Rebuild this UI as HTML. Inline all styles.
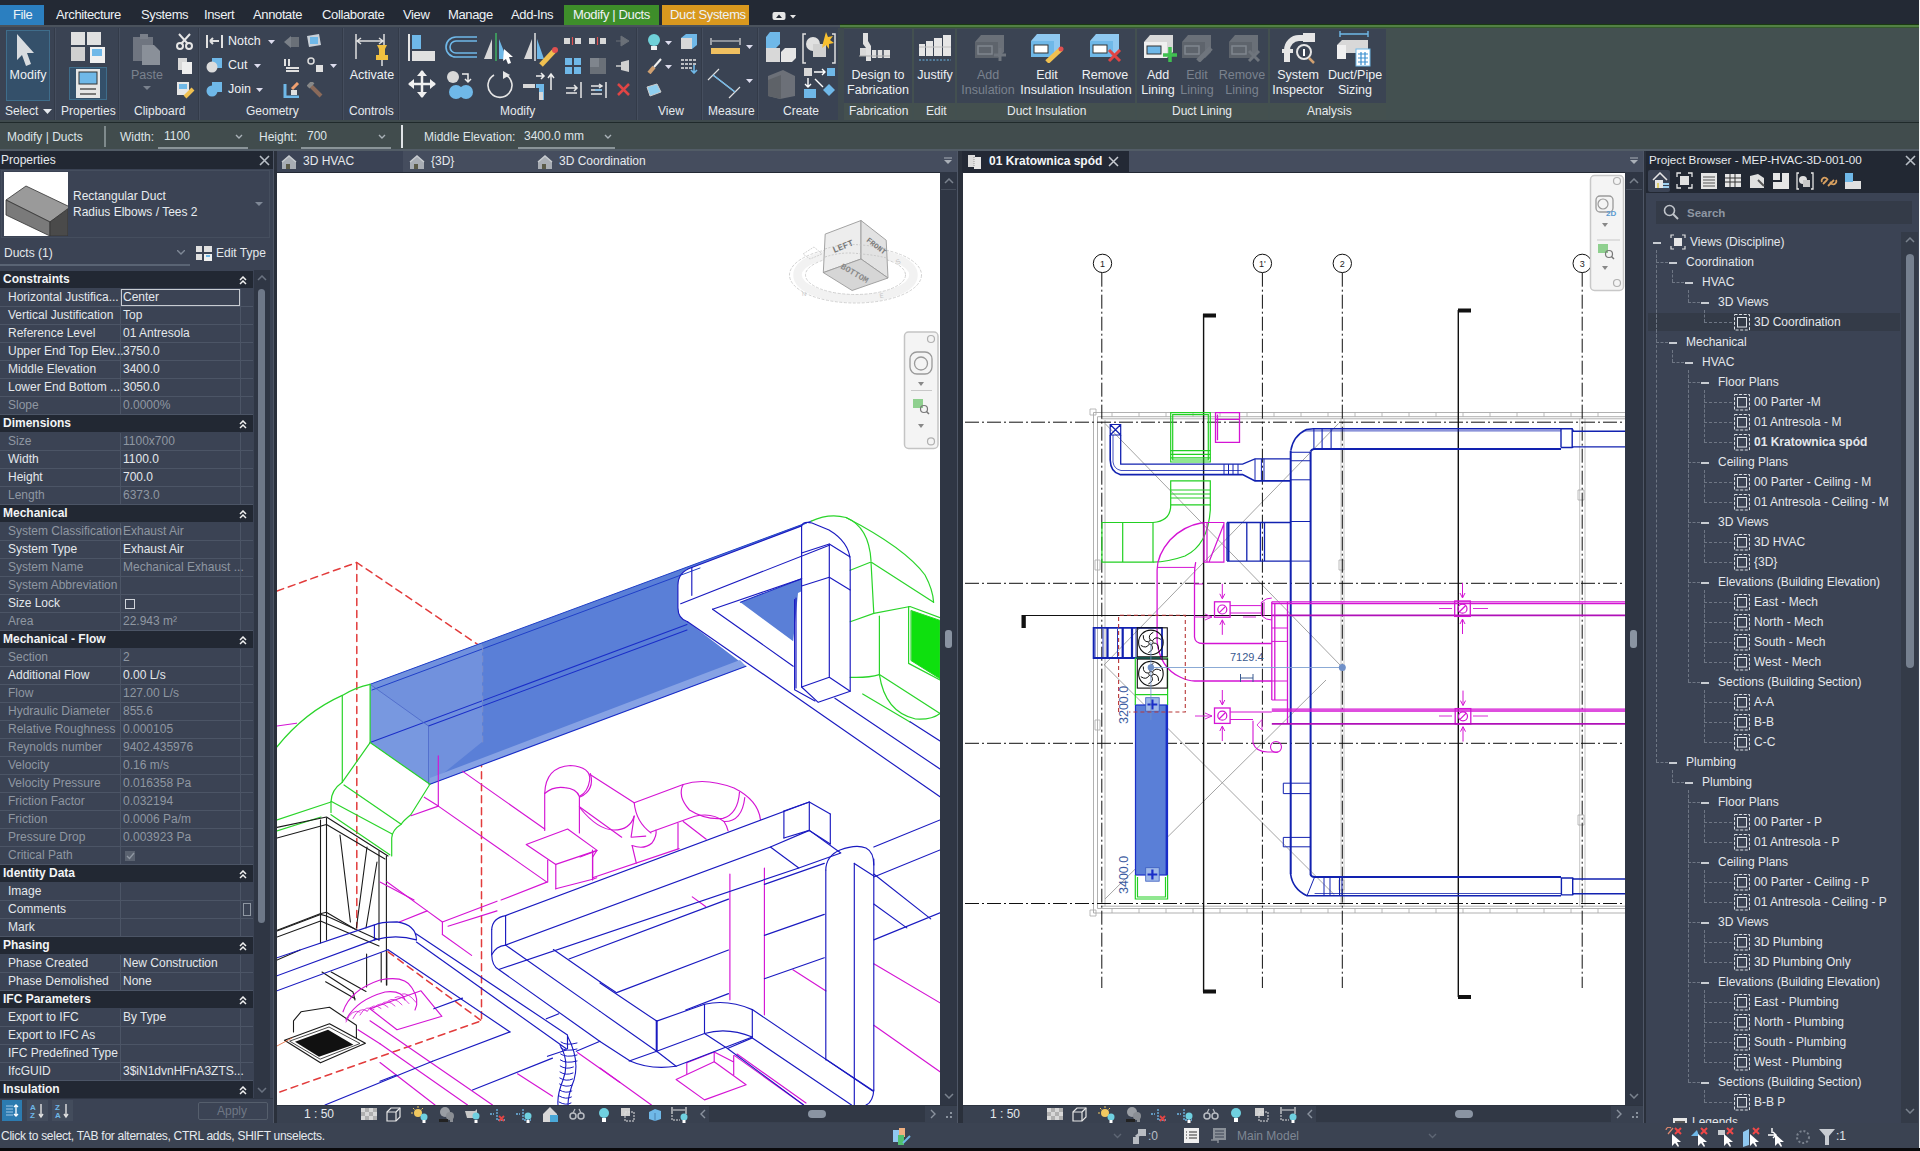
<!DOCTYPE html>
<html><head><meta charset="utf-8">
<style>
*{box-sizing:border-box;margin:0;padding:0}
html,body{width:1920px;height:1151px;overflow:hidden}
body{position:relative;background:#232934;font-family:"Liberation Sans",sans-serif;color:#e8ecf0;font-size:12px}
.a{position:absolute}
.t{position:absolute;white-space:nowrap;line-height:14px}
/* menu */
#menu{left:0;top:0;width:1920px;height:25px;background:#232934}
.mt{position:absolute;top:7.5px;font-size:13px;letter-spacing:-0.37px;color:#eef2f6;white-space:nowrap;line-height:14px}
/* ribbon */
#rib{left:0;top:25px;width:1920px;height:97px;background:#3a4353}
.sep{position:absolute;top:3px;width:2px;height:93px;background:#333b49;border-right:1px solid #454e5e}
.pt{position:absolute;top:79px;font-size:12px;color:#e6eaee;white-space:nowrap;line-height:14px}
.rl{position:absolute;font-size:12.5px;color:#eef1f4;white-space:nowrap;line-height:15px;text-align:center}
.dis{color:#7a828e}
/* options */
#opt{left:0;top:122px;width:1920px;height:29px;background:#414c4d;border-top:1px solid #202a2b;border-bottom:2px solid #525c66}
.ot{position:absolute;top:8px;font-size:12px;color:#dfe5e8;white-space:nowrap;line-height:14px}
/* panels */
.hdr{position:absolute;height:18px;background:#222833;font-size:12px;color:#e6eaee;line-height:18px;white-space:nowrap}
#props{left:0;top:151px;width:273px;height:972px;background:#3b4354}
.row{position:absolute;left:0;width:253px;height:18px;border-bottom:1px solid #4c5566;font-size:12px;line-height:17px;white-space:nowrap}
.row .l{position:absolute;left:8px;top:0;color:#e4e8ec}
.row .v{position:absolute;left:123px;top:0;color:#e4e8ec}
.row .d{position:absolute;left:120px;top:0;width:1px;height:18px;background:#4c5566}
.row .d2{position:absolute;left:240px;top:0;width:1px;height:18px;background:#4c5566}
.row.g .l,.row.g .v{color:#8f97a2}
.sh{position:absolute;left:0;width:253px;height:18px;background:#222833;font-weight:bold;font-size:12px;line-height:17px;color:#f2f4f6;padding-left:3px;border-bottom:1px solid #3b4354}
.sh .c{position:absolute;left:238px;top:0;font-weight:normal;font-size:10px}
/* views */
.tabbar{position:absolute;height:21px;background:#454d5e}
.vp{position:absolute;background:#fff;overflow:hidden}
.vcb{position:absolute;height:18px;background:#394150}
#status{left:0;top:1123px;width:1920px;height:25px;background:#3b4352}
#pb{left:1646px;top:151px;width:274px;height:972px;background:#3b4354}
.tr{position:absolute;font-size:12px;color:#e4e8ec;white-space:nowrap;line-height:14px}
</style></head>
<body>
<!-- MENU -->
<div id="menu" class="a">
  <div class="a" style="left:0;top:5px;width:44px;height:20px;background:#2b7fc0"></div>
  <div class="mt" style="left:13px">File</div>
  <div class="mt" style="left:56px">Architecture</div>
  <div class="mt" style="left:141px">Systems</div>
  <div class="mt" style="left:204px">Insert</div>
  <div class="mt" style="left:253px">Annotate</div>
  <div class="mt" style="left:322px">Collaborate</div>
  <div class="mt" style="left:403px">View</div>
  <div class="mt" style="left:448px">Manage</div>
  <div class="mt" style="left:511px">Add-Ins</div>
  <div class="a" style="left:564px;top:5px;width:95px;height:20px;background:#3e8e2a"></div>
  <div class="mt" style="left:573px">Modify | Ducts</div>
  <div class="a" style="left:662px;top:5px;width:87px;height:20px;background:#d9981e"></div>
  <div class="mt" style="left:670px">Duct Systems</div>
  <svg class="a" style="left:772px;top:11px" width="26" height="10"><rect x="0.5" y="1" width="13" height="8" rx="2" fill="#e6e6e6"/><path d="M4,7 L7,3.5 L10,7 Z" fill="#232934"/><path d="M18,4 L24,4 L21,7.5 Z" fill="#e6e6e6"/></svg>
</div>
<!-- RIBBON -->
<div id="rib" class="a">
  <!-- top highlight line left part -->
  <div class="a" style="left:0;top:0;width:840px;height:2px;background:#4a525c"></div>
  <!-- contextual area -->
  <div class="a" style="left:840px;top:0;width:1080px;height:97px;background:#435050"></div>
  <div class="a" style="left:840px;top:-1px;width:1080px;height:1px;background:#1a3a12"></div>
  <div class="a" style="left:840px;top:0;width:1080px;height:2px;background:#528044"></div>
  <div class="a" style="left:840px;top:2px;width:1080px;height:1px;background:#355a2e"></div>
  <!-- contextual panel bodies -->
  <div class="a" style="left:844px;top:4px;width:68px;height:74px;background:#3b4453"></div>
  <div class="a" style="left:914px;top:4px;width:41px;height:74px;background:#3b4453"></div>
  <div class="a" style="left:957px;top:4px;width:178px;height:74px;background:#3b4453"></div>
  <div class="a" style="left:1137px;top:4px;width:131px;height:74px;background:#3b4453"></div>
  <div class="a" style="left:1270px;top:4px;width:116px;height:74px;background:#3b4453"></div>
  <div class="a" style="left:844px;top:78px;width:68px;height:17px;background:#44504f"></div>
  <div class="a" style="left:914px;top:78px;width:41px;height:17px;background:#44504f"></div>
  <div class="a" style="left:957px;top:78px;width:178px;height:17px;background:#44504f"></div>
  <div class="a" style="left:1137px;top:78px;width:131px;height:17px;background:#44504f"></div>
  <div class="a" style="left:1270px;top:78px;width:116px;height:17px;background:#44504f"></div>
  <!-- separators -->
  <div class="sep" style="left:54px"></div>
  <div class="sep" style="left:118px"></div>
  <div class="sep" style="left:198px"></div>
  <div class="sep" style="left:342px"></div>
  <div class="sep" style="left:398px"></div>
  <div class="sep" style="left:636px"></div>
  <div class="sep" style="left:701px"></div>
  <div class="sep" style="left:757px"></div>
  <div class="a" style="left:838px;top:3px;width:6px;height:93px;background:#3f4a4f"></div>
  <!-- panel titles -->
  <div class="pt" style="left:5px">Select</div>
  <svg class="a" style="left:43px;top:84px" width="9" height="6"><path d="M0 0H9L4.5 5Z" fill="#e6eaee"/></svg>
  <div class="pt" style="left:61px">Properties</div>
  <div class="pt" style="left:134px">Clipboard</div>
  <div class="pt" style="left:246px">Geometry</div>
  <div class="pt" style="left:349px">Controls</div>
  <div class="pt" style="left:500px">Modify</div>
  <div class="pt" style="left:658px">View</div>
  <div class="pt" style="left:708px">Measure</div>
  <div class="pt" style="left:783px">Create</div>
  <div class="pt" style="left:849px">Fabrication</div>
  <div class="pt" style="left:926px">Edit</div>
  <div class="pt" style="left:1007px">Duct Insulation</div>
  <div class="pt" style="left:1172px">Duct Lining</div>
  <div class="pt" style="left:1307px">Analysis</div>

  <!-- Modify button -->
  <div class="a" style="left:6px;top:5px;width:44px;height:71px;background:#34506a;border:1px solid #3f6d8b"></div>
  <svg class="a" style="left:16px;top:8px" width="20" height="34"><path d="M1 1L18 20H11L15 31L10 33L6 22L1 27Z" fill="#d8dce0"/></svg>
  <div class="rl" style="left:6px;top:43px;width:44px">Modify</div>
  <!-- Properties -->
  <svg class="a" style="left:70px;top:6px" width="36" height="32">
    <rect x="1" y="1" width="14" height="13" fill="#e0e0e0"/><rect x="17" y="1" width="14" height="13" fill="#e0e0e0"/>
    <rect x="1" y="16" width="14" height="14" fill="#d0d0d0"/><rect x="20" y="16" width="15" height="16" fill="#f0f0f0"/><rect x="22" y="18" width="10" height="7" fill="#6fb8e8"/>
  </svg>
  <div class="a" style="left:69px;top:42px;width:38px;height:33px;border:1px solid #3f6d8b;background:#34506a"></div>
  <svg class="a" style="left:76px;top:44px" width="24" height="29"><rect x="0" y="0" width="24" height="29" fill="#e6e6e6"/><rect x="3" y="3" width="18" height="12" fill="#6fb8e8" stroke="#333" stroke-width="1"/><path d="M4 20H20M4 25H20" stroke="#555" stroke-width="1.5"/></svg>
  <!-- Clipboard -->
  <svg class="a" style="left:132px;top:8px" width="30" height="32"><rect x="1" y="4" width="20" height="24" fill="#6f7580"/><rect x="8" y="1" width="8" height="5" fill="#7a808a"/><path d="M10 12H22L28 18V32H10Z" fill="#8a9099"/></svg>
  <div class="rl dis" style="left:128px;top:43px;width:38px">Paste</div>
  <svg class="a" style="left:143px;top:61px" width="8" height="5"><path d="M0 0H8L4 4Z" fill="#7a828e"/></svg>
  <svg class="a" style="left:176px;top:8px" width="18" height="17"><circle cx="4" cy="13" r="3" fill="none" stroke="#e6e6e6" stroke-width="2"/><circle cx="13" cy="13" r="3" fill="none" stroke="#e6e6e6" stroke-width="2"/><path d="M3 1L12 11M14 1L5 11" stroke="#e6e6e6" stroke-width="2"/></svg>
  <svg class="a" style="left:177px;top:32px" width="16" height="17"><rect x="1" y="1" width="9" height="12" fill="#d8d8d8"/><rect x="5" y="5" width="10" height="12" fill="#eeeeee"/></svg>
  <svg class="a" style="left:176px;top:56px" width="19" height="18"><rect x="1" y="1" width="12" height="13" fill="#e6e6e6"/><rect x="3" y="3" width="8" height="5" fill="#6fb8e8"/><path d="M9 16L17 8" stroke="#f0c050" stroke-width="4"/></svg>
  <!-- Geometry -->
  <svg class="a" style="left:206px;top:9px" width="17" height="15"><path d="M1 1V14M16 1V14M4 7H13M4 7L7 4M4 7L7 10" stroke="#e0e0e0" stroke-width="2" fill="none"/></svg>
  <div class="t" style="left:228px;top:9px;font-size:12.5px;color:#eef1f4">Notch</div>
  <svg class="a" style="left:268px;top:15px" width="7" height="4"><path d="M0 0H7L3.5 4Z" fill="#dde"/></svg>
  <svg class="a" style="left:206px;top:32px" width="17" height="16"><rect x="6" y="1" width="10" height="10" fill="#6fb8e8"/><circle cx="6" cy="10" r="5.5" fill="#dcdcdc"/></svg>
  <div class="t" style="left:228px;top:33px;font-size:12.5px;color:#eef1f4">Cut</div>
  <svg class="a" style="left:254px;top:39px" width="7" height="4"><path d="M0 0H7L3.5 4Z" fill="#dde"/></svg>
  <svg class="a" style="left:206px;top:56px" width="17" height="16"><rect x="6" y="1" width="10" height="10" fill="#6fb8e8"/><circle cx="6" cy="10" r="5.5" fill="#6fb8e8"/></svg>
  <div class="t" style="left:228px;top:57px;font-size:12.5px;color:#eef1f4">Join</div>
  <svg class="a" style="left:256px;top:63px" width="7" height="4"><path d="M0 0H7L3.5 4Z" fill="#dde"/></svg>
  <svg class="a" style="left:283px;top:9px" width="17" height="15"><path d="M1 8L8 2V14Z" fill="#7a8088"/><rect x="8" y="3" width="8" height="10" fill="#6a7078"/></svg>
  <svg class="a" style="left:306px;top:8px" width="16" height="16"><path d="M1 3L13 1L15 12L3 14Z" fill="#c8d0d8"/><rect x="4" y="4" width="8" height="7" fill="#6fb8e8"/></svg>
  <svg class="a" style="left:283px;top:33px" width="17" height="16"><path d="M2 1V8M6 1V8M3 10H16M3 13H16" stroke="#e0e0e0" stroke-width="2"/></svg>
  <svg class="a" style="left:307px;top:32px" width="18" height="16"><circle cx="4" cy="4" r="3" fill="none" stroke="#ddd" stroke-width="1.5"/><rect x="9" y="8" width="7" height="7" fill="#e0e0e0"/></svg>
  <svg class="a" style="left:330px;top:39px" width="7" height="4"><path d="M0 0H7L3.5 4Z" fill="#dde"/></svg>
  <svg class="a" style="left:283px;top:57px" width="17" height="16"><path d="M2 2V15H16" stroke="#6fb8e8" stroke-width="3" fill="none"/><rect x="8" y="8" width="6" height="5" fill="#e0e0e0"/><path d="M9 7L15 1" stroke="#f0a070" stroke-width="3"/></svg>
  <svg class="a" style="left:307px;top:57px" width="16" height="16"><path d="M3 3L14 14" stroke="#8a6a5a" stroke-width="4"/><path d="M1 5L6 0" stroke="#888" stroke-width="4"/></svg>
  <!-- Controls -->
  <svg class="a" style="left:354px;top:8px" width="36" height="34"><path d="M2 1V26M30 1V26M3 8H29M3 8L7 5M3 8L7 11M29 8L25 5M29 8L25 11" stroke="#e0e0e0" stroke-width="1.5" fill="none"/><path d="M23 12H33L31 16V22H34V27H22V22H25V16Z" fill="#f0c040"/><path d="M28 27V33" stroke="#e0e0e0" stroke-width="1.5"/></svg>
  <div class="rl" style="left:348px;top:43px;width:48px">Activate</div>
  <!-- Modify panel -->
  <svg class="a" style="left:408px;top:8px" width="28" height="30"><path d="M1 1V28" stroke="#e6e6e6" stroke-width="2"/><rect x="4" y="2" width="9" height="14" fill="#6fb8e8"/><rect x="4" y="18" width="23" height="10" fill="#e0e0e0"/></svg>
  <svg class="a" style="left:444px;top:11px" width="34" height="22"><path d="M33 1H12A10 10 0 0 0 12 21H33M33 5H12A6 6 0 0 0 12 17H33" stroke="#6fb8e8" stroke-width="1.6" fill="none"/></svg>
  <svg class="a" style="left:483px;top:6px" width="34" height="36"><path d="M9 28L1 28L9 8Z" fill="#d8d8d8"/><path d="M13 2V30" stroke="#40b060" stroke-width="1.5"/><path d="M16 8L24 28H16Z" fill="#6fb8e8"/><path d="M21 18L30 26H26L28 32L25 33L23 28L20 30Z" fill="#fff"/></svg>
  <svg class="a" style="left:522px;top:6px" width="36" height="36"><path d="M10 28L2 28L10 8Z" fill="#d8d8d8"/><path d="M13 2V30" stroke="#e0e0e0" stroke-width="1.5"/><path d="M15 8L22 28H15Z" fill="#6fb8e8"/><path d="M19 34L32 20" stroke="#f0c050" stroke-width="5"/><circle cx="33" cy="19" r="3" fill="#e05050"/></svg>
  <svg class="a" style="left:408px;top:45px" width="28" height="28"><path d="M14 1V27M1 14H27" stroke="#f0f0f0" stroke-width="2.5"/><path d="M14 0L9 6H19ZM14 28L9 22H19ZM0 14L6 9V19ZM28 14L22 9V19Z" fill="#f0f0f0"/></svg>
  <svg class="a" style="left:446px;top:45px" width="30" height="30"><circle cx="7" cy="7" r="6" fill="#d8d8d8"/><path d="M16 4H22V12M19 9L22 12L25 9" stroke="#eee" stroke-width="1.5" fill="none"/><circle cx="10" cy="22" r="7" fill="#6fb8e8"/><circle cx="20" cy="22" r="7" fill="#6fb8e8"/></svg>
  <svg class="a" style="left:486px;top:44px" width="30" height="32"><path d="M20 6A12 12 0 1 1 8 6" stroke="#e6e6e6" stroke-width="1.6" fill="none"/><path d="M17 2L24 6L17 10Z" fill="#e6e6e6"/></svg>
  <svg class="a" style="left:522px;top:45px" width="36" height="30"><path d="M14 6L22 6M19 3L22 6L19 9" stroke="#eee" stroke-width="1.5" fill="none"/><rect x="1" y="14" width="12" height="4" fill="#d8d8d8"/><path d="M14 14H22V30H17V18H14Z" fill="#6fb8e8"/><rect x="17" y="22" width="4" height="8" fill="#d8d8d8"/><path d="M29 4V20M26 8L29 4L32 8" stroke="#eee" stroke-width="1.5" fill="none"/></svg>
  <svg class="a" style="left:564px;top:12px" width="18" height="8"><rect x="0" y="1" width="6" height="6" fill="#d8d8d8"/><rect x="11" y="1" width="6" height="6" fill="#d8d8d8"/><path d="M8.5 0V8" stroke="#e05050" stroke-width="1.2"/></svg>
  <svg class="a" style="left:589px;top:12px" width="18" height="8"><rect x="0" y="1" width="6" height="6" fill="#d8d8d8"/><rect x="11" y="1" width="6" height="6" fill="#d8d8d8"/><path d="M8.5 0V8" stroke="#e05050" stroke-width="1.2"/></svg>
  <svg class="a" style="left:615px;top:9px" width="16" height="14"><path d="M1 7H6M6 2V12L14 7Z" stroke="#6a7078" fill="#6a7078"/></svg>
  <svg class="a" style="left:565px;top:33px" width="16" height="16"><rect x="0" y="0" width="7" height="7" fill="#6fb8e8"/><rect x="9" y="0" width="7" height="7" fill="#6fb8e8"/><rect x="0" y="9" width="7" height="7" fill="#6fb8e8"/><rect x="9" y="9" width="7" height="7" fill="#6fb8e8"/></svg>
  <svg class="a" style="left:590px;top:33px" width="16" height="16"><rect x="0" y="0" width="16" height="16" fill="#6a7078"/><rect x="0" y="0" width="9" height="9" fill="#7f858d"/></svg>
  <svg class="a" style="left:615px;top:34px" width="16" height="14"><path d="M1 7H6" stroke="#ccc" stroke-width="1.5"/><path d="M6 3L14 1V13L6 11Z" fill="#d0d0d0"/></svg>
  <svg class="a" style="left:565px;top:57px" width="17" height="16"><path d="M16 0V16M1 6H12M9 3L12 6L9 9M1 11H12" stroke="#e6e6e6" stroke-width="1.5" fill="none"/></svg>
  <svg class="a" style="left:590px;top:57px" width="17" height="16"><path d="M16 0V16M1 4H12M9 2L12 4L9 6M1 8H12M1 12H12" stroke="#e6e6e6" stroke-width="1.5" fill="none"/><path d="M5 8H12" stroke="#6fb8e8" stroke-width="1.5"/></svg>
  <svg class="a" style="left:617px;top:58px" width="13" height="13"><path d="M1 1L12 12M12 1L1 12" stroke="#e04545" stroke-width="2.5"/></svg>
  <!-- View panel -->
  <svg class="a" style="left:647px;top:9px" width="14" height="16"><circle cx="7" cy="6" r="6" fill="#6fd0d8"/><rect x="4" y="12" width="6" height="4" fill="#eee"/></svg>
  <svg class="a" style="left:665px;top:16px" width="7" height="4"><path d="M0 0H7L3.5 4Z" fill="#dde"/></svg>
  <svg class="a" style="left:680px;top:8px" width="18" height="17"><path d="M1 5L6 1H17V12L12 16H1Z" fill="#6fb8e8"/><rect x="1" y="5" width="11" height="11" fill="#d8d8d8"/></svg>
  <svg class="a" style="left:647px;top:33px" width="15" height="16"><path d="M2 15L7 9" stroke="#d0a070" stroke-width="4"/><path d="M7 9L14 1" stroke="#f0f0f0" stroke-width="2"/></svg>
  <svg class="a" style="left:665px;top:40px" width="7" height="4"><path d="M0 0H7L3.5 4Z" fill="#dde"/></svg>
  <svg class="a" style="left:680px;top:33px" width="18" height="16"><path d="M1 2H16M1 6H16M1 10H12" stroke="#e6e6e6" stroke-width="1.4" stroke-dasharray="3 1"/><path d="M14 7V15M11 12L14 15L17 12" stroke="#6fb8e8" stroke-width="1.6" fill="none"/></svg>
  <svg class="a" style="left:645px;top:58px" width="17" height="14"><path d="M2 4L12 1L16 9L5 13Z" fill="#8fcff0" stroke="#ccc"/></svg>
  <!-- Measure -->
  <svg class="a" style="left:710px;top:12px" width="31" height="18"><path d="M1 1V8M30 1V8M2 4H29" stroke="#e0e0e0" stroke-width="1.2"/><rect x="1" y="11" width="29" height="6" fill="#f0c060"/></svg>
  <svg class="a" style="left:746px;top:20px" width="7" height="4"><path d="M0 0H7L3.5 4Z" fill="#dde"/></svg>
  <svg class="a" style="left:707px;top:42px" width="34" height="32"><path d="M1 13L12 2M22 31L33 20M6 8L28 25" stroke="#e0e0e0" stroke-width="1.2"/><path d="M6 8L28 25" stroke="#6fb8e8" stroke-width="1.4"/></svg>
  <svg class="a" style="left:746px;top:54px" width="7" height="4"><path d="M0 0H7L3.5 4Z" fill="#dde"/></svg>
  <!-- Create -->
  <svg class="a" style="left:765px;top:6px" width="32" height="32"><path d="M1 6L5 1H15V13L11 17H1Z" fill="#6fb8e8"/><rect x="1" y="17" width="14" height="14" fill="#d8d8d8"/><path d="M16 21L20 17H31V27L27 31H16Z" fill="#e6e6e6"/></svg>
  <svg class="a" style="left:802px;top:5px" width="34" height="34"><path d="M4 4H1V33H4M30 4H33V33H30" stroke="#e0e0e0" stroke-width="1.5" fill="none"/><circle cx="11" cy="14" r="7" fill="#e0e0e0"/><rect x="11" y="14" width="13" height="13" fill="#d0d0d0"/><path d="M24 2L26 7L31 6L28 10L32 13L27 14L27 19L24 15L20 18L21 13Z" fill="#f8c030"/></svg>
  <svg class="a" style="left:765px;top:43px" width="32" height="32"><path d="M3 8L18 2L30 8V28L15 31L3 28Z" fill="#6c7078"/><path d="M3 12L16 7V31L3 28Z" fill="#5e6268"/></svg>
  <svg class="a" style="left:803px;top:42px" width="34" height="32"><rect x="1" y="1" width="8" height="8" fill="#d8d8d8"/><path d="M11 5H22M19 2L22 5L19 8" stroke="#fff" stroke-width="1.4" fill="none"/><rect x="24" y="1" width="8" height="8" fill="#6fb8e8"/><path d="M5 11V20M2 17L5 20L8 17M12 12L20 20" stroke="#fff" stroke-width="1.4" fill="none"/><rect x="1" y="22" width="12" height="9" fill="#6fb8e8"/><path d="M26 17L32 23L26 29L20 23Z" fill="#6fb8e8"/></svg>
  <!-- Fabrication -->
  <svg class="a" style="left:858px;top:7px" width="34" height="30"><path d="M10 1V9L13 14V29H8V16L5 12V1" fill="#e0e0e0"/><rect x="2" y="16" width="6" height="8" fill="#d8d8d8"/><rect x="14" y="18" width="18" height="8" fill="#e0e0e0"/><path d="M19 18V26M25 18V26" stroke="#3b4453" stroke-width="1.5"/><path d="M1 24H32" stroke="#aaa" stroke-width="1"/></svg>
  <div class="rl" style="left:844px;top:43px;width:68px">Design to<br>Fabrication</div>
  <!-- Edit -->
  <svg class="a" style="left:918px;top:9px" width="34" height="28"><path d="M1 10H7V22H1ZM8 7H15V22H8ZM16 4H24V22H16ZM25 1H33V22H25Z" fill="#e6e6e6"/><path d="M1 13H33" stroke="#c0c0c0" stroke-width="1"/><path d="M1 26H33" stroke="#6fb8e8" stroke-width="1.2" stroke-dasharray="2 1.5"/></svg>
  <div class="rl" style="left:912px;top:43px;width:46px">Justify</div>
  <!-- Duct Insulation -->
  <svg class="a" style="left:974px;top:9px" width="32" height="28"><path d="M1 8L7 1H30V18L24 24H1Z" fill="#6a7078"/><path d="M1 8H24V24H1Z" fill="#5e646c"/><rect x="4" y="12" width="14" height="8" fill="none" stroke="#80868e" stroke-width="1.5"/><path d="M26 14V27M20 21H32" stroke="#6f757d" stroke-width="3"/></svg>
  <div class="rl dis" style="left:957px;top:43px;width:62px">Add<br>Insulation</div>
  <svg class="a" style="left:1030px;top:8px" width="34" height="30"><path d="M1 8L7 1H30V18L24 24H1Z" fill="#8fc8f0"/><path d="M1 8H24V24H1Z" fill="#6fb8e8"/><rect x="4" y="12" width="14" height="8" fill="#fff" stroke="#333" stroke-width="1"/><path d="M17 29L31 16" stroke="#f0c050" stroke-width="5"/><circle cx="31" cy="16" r="2.5" fill="#e05050"/></svg>
  <div class="rl" style="left:1016px;top:43px;width:62px">Edit<br>Insulation</div>
  <svg class="a" style="left:1089px;top:8px" width="34" height="30"><path d="M1 8L7 1H30V18L24 24H1Z" fill="#8fc8f0"/><path d="M1 8H24V24H1Z" fill="#6fb8e8"/><rect x="4" y="12" width="14" height="8" fill="#fff" stroke="#333" stroke-width="1"/><path d="M20 17L31 28M31 17L20 28" stroke="#e04545" stroke-width="3"/></svg>
  <div class="rl" style="left:1074px;top:43px;width:62px">Remove<br>Insulation</div>
  <!-- Duct Lining -->
  <svg class="a" style="left:1143px;top:9px" width="34" height="28"><path d="M1 8L7 1H30V18L24 24H1Z" fill="#d8d8d8"/><path d="M1 8H24V24H1Z" fill="#f0f0f0"/><rect x="4" y="12" width="14" height="8" fill="#6fb8e8" stroke="#333" stroke-width="1"/><path d="M27 13V28M20 21H34" stroke="#40c050" stroke-width="3.5"/></svg>
  <div class="rl" style="left:1136px;top:43px;width:44px">Add<br>Lining</div>
  <svg class="a" style="left:1181px;top:9px" width="34" height="28"><path d="M1 8L7 1H30V18L24 24H1Z" fill="#6a7078"/><path d="M1 8H24V24H1Z" fill="#5e646c"/><rect x="4" y="12" width="14" height="8" fill="none" stroke="#80868e" stroke-width="1.5"/><path d="M17 27L30 14" stroke="#6f757d" stroke-width="5"/></svg>
  <div class="rl dis" style="left:1176px;top:43px;width:42px">Edit<br>Lining</div>
  <svg class="a" style="left:1228px;top:9px" width="34" height="28"><path d="M1 8L7 1H30V18L24 24H1Z" fill="#6a7078"/><path d="M1 8H24V24H1Z" fill="#5e646c"/><rect x="4" y="12" width="14" height="8" fill="none" stroke="#80868e" stroke-width="1.5"/><path d="M21 17L31 27M31 17L21 27" stroke="#6f757d" stroke-width="3"/></svg>
  <div class="rl dis" style="left:1216px;top:43px;width:52px">Remove<br>Lining</div>
  <!-- Analysis -->
  <svg class="a" style="left:1281px;top:7px" width="34" height="34"><path d="M6 30V18A12 12 0 0 1 18 6H24" stroke="#e6e6e6" stroke-width="6" fill="none"/><rect x="22" y="1" width="12" height="9" fill="#e6e6e6"/><rect x="1" y="17" width="11" height="4" fill="#e6e6e6"/><circle cx="23" cy="20" r="7" fill="#3b4453" stroke="#e6e6e6" stroke-width="2"/><path d="M23 17V24" stroke="#fff" stroke-width="2"/><path d="M28 26L33 31" stroke="#d0a070" stroke-width="2.5"/></svg>
  <div class="rl" style="left:1270px;top:43px;width:56px">System<br>Inspector</div>
  <svg class="a" style="left:1336px;top:6px" width="36" height="36"><path d="M4 3H32M4 0V6M32 0V6" stroke="#6fb8e8" stroke-width="1.4"/><path d="M1 14L6 9H32V22H10V28H1Z" fill="#d8d8d8"/><path d="M1 14H10V28H1Z" fill="#f0f0f0"/><rect x="20" y="18" width="14" height="17" fill="#fff" stroke="#6fb8e8"/><path d="M22 23H32M22 27H32M22 31H32M25 21V34M29 21V34" stroke="#3a8fd0" stroke-width="1.2"/></svg>
  <div class="rl" style="left:1326px;top:43px;width:58px">Duct/Pipe<br>Sizing</div>
  <!-- bottom edge -->
  <div class="a" style="left:0;top:95px;width:1920px;height:2px;background:#3f4a4d"></div>
</div>

<!-- OPTIONS BAR -->
<div id="opt" class="a">
  <div class="ot" style="left:7px;top:7px">Modify | Ducts</div>
  <div class="a" style="left:104px;top:3px;width:2px;height:21px;background:#7f8a8c"></div>
  <div class="ot" style="left:120px;top:7px">Width:</div>
  <div class="ot" style="left:164px;top:6px">1100</div>
  <svg class="a" style="left:235px;top:11px" width="8" height="5"><path d="M1 1L4 4L7 1" stroke="#aab2b8" stroke-width="1.4" fill="none"/></svg>
  <div class="a" style="left:158px;top:24px;width:90px;height:2px;background:#8a9498"></div>
  <div class="ot" style="left:259px;top:7px">Height:</div>
  <div class="ot" style="left:307px;top:6px">700</div>
  <svg class="a" style="left:378px;top:11px" width="8" height="5"><path d="M1 1L4 4L7 1" stroke="#aab2b8" stroke-width="1.4" fill="none"/></svg>
  <div class="a" style="left:301px;top:24px;width:90px;height:2px;background:#8a9498"></div>
  <div class="a" style="left:401px;top:2px;width:2px;height:23px;background:#e0e4e6"></div>
  <div class="ot" style="left:424px;top:7px">Middle Elevation:</div>
  <div class="ot" style="left:524px;top:6px">3400.0 mm</div>
  <svg class="a" style="left:604px;top:11px" width="8" height="5"><path d="M1 1L4 4L7 1" stroke="#aab2b8" stroke-width="1.4" fill="none"/></svg>
  <div class="a" style="left:518px;top:24px;width:97px;height:2px;background:#8a9498"></div>
</div>

<!-- PROPERTIES -->
<div id="props" class="a">
<div class="hdr" style="left:0;top:0;width:273px;padding-left:1px">Properties</div>
<svg class="a" style="left:259px;top:4px" width="11" height="11"><path d="M1 1L10 10M10 1L1 10" stroke="#b8bec6" stroke-width="1.6"/></svg>
<div class="a" style="left:1px;top:19px;width:269px;height:68px;border:1px solid #454e5e;background:#3b4354"></div>
<div class="a" style="left:4px;top:21px;width:64px;height:64px;background:#fff"></div>
<svg class="a" style="left:4px;top:21px" width="64" height="64"><path d="M2 28L22 14L66 35L46 50Z" fill="#9a9a9a" stroke="#333" stroke-width="0.8"/><path d="M2 28L46 50V64L2 43Z" fill="#7a7a7a" stroke="#333" stroke-width="0.8"/><path d="M46 50L64 37V64H46Z" fill="#4a4a4a" stroke="#333" stroke-width="0.8"/></svg>
<div class="t" style="left:73px;top:38px;color:#e8ecf0">Rectangular Duct</div>
<div class="t" style="left:73px;top:54px;color:#e8ecf0">Radius Elbows / Tees 2</div>
<svg class="a" style="left:255px;top:51px" width="8" height="5"><path d="M0 0H8L4 4Z" fill="#7f8896"/></svg>
<div class="t" style="left:4px;top:95px;color:#e4e8ec">Ducts (1)</div>
<svg class="a" style="left:177px;top:99px" width="8" height="6"><path d="M0 0L4 4L8 0" stroke="#7f8896" fill="none" stroke-width="1.4"/></svg>
<div class="a" style="left:0;top:113px;width:190px;height:2px;background:#5a6474"></div>
<svg class="a" style="left:195px;top:94px" width="18" height="16"><rect x="1" y="1" width="6" height="6" fill="#e0e0e0"/><rect x="9" y="1" width="8" height="6" fill="#e0e0e0"/><rect x="1" y="9" width="6" height="6" fill="#e0e0e0"/><rect x="9" y="9" width="8" height="7" fill="#f0f0f0"/><rect x="11" y="10" width="4" height="2" fill="#6fb8e8"/></svg>
<div class="t" style="left:216px;top:95px;color:#e4e8ec">Edit Type</div>
<div class="sh" style="top:120px">Constraints<svg class="a" style="left:239px;top:5px" width="8" height="9"><path d="M1 4L4 1L7 4M1 8L4 5L7 8" stroke="#f0f0f0" stroke-width="1.5" fill="none"/></svg></div>
<div class="row" style="top:138px"><div class="d"></div><div class="d2"></div><div class="a" style="left:121px;top:0;width:119px;height:17px;border:1px solid #c8ccd2"></div><span class="l">Horizontal Justifica...</span><span class="v">Center</span></div>
<div class="row" style="top:156px"><div class="d"></div><div class="d2"></div><span class="l">Vertical Justification</span><span class="v">Top</span></div>
<div class="row" style="top:174px"><div class="d"></div><div class="d2"></div><span class="l">Reference Level</span><span class="v">01 Antresola</span></div>
<div class="row" style="top:192px"><div class="d"></div><div class="d2"></div><span class="l">Upper End Top Elev...</span><span class="v">3750.0</span></div>
<div class="row" style="top:210px"><div class="d"></div><div class="d2"></div><span class="l">Middle Elevation</span><span class="v">3400.0</span></div>
<div class="row" style="top:228px"><div class="d"></div><div class="d2"></div><span class="l">Lower End Bottom ...</span><span class="v">3050.0</span></div>
<div class="row g" style="top:246px"><div class="d"></div><div class="d2"></div><span class="l">Slope</span><span class="v">0.0000%</span></div>
<div class="sh" style="top:264px">Dimensions<svg class="a" style="left:239px;top:5px" width="8" height="9"><path d="M1 4L4 1L7 4M1 8L4 5L7 8" stroke="#f0f0f0" stroke-width="1.5" fill="none"/></svg></div>
<div class="row g" style="top:282px"><div class="d"></div><div class="d2"></div><span class="l">Size</span><span class="v">1100x700</span></div>
<div class="row" style="top:300px"><div class="d"></div><div class="d2"></div><span class="l">Width</span><span class="v">1100.0</span></div>
<div class="row" style="top:318px"><div class="d"></div><div class="d2"></div><span class="l">Height</span><span class="v">700.0</span></div>
<div class="row g" style="top:336px"><div class="d"></div><div class="d2"></div><span class="l">Length</span><span class="v">6373.0</span></div>
<div class="sh" style="top:354px">Mechanical<svg class="a" style="left:239px;top:5px" width="8" height="9"><path d="M1 4L4 1L7 4M1 8L4 5L7 8" stroke="#f0f0f0" stroke-width="1.5" fill="none"/></svg></div>
<div class="row g" style="top:372px"><div class="d"></div><div class="d2"></div><span class="l">System Classification</span><span class="v">Exhaust Air</span></div>
<div class="row" style="top:390px"><div class="d"></div><div class="d2"></div><span class="l">System Type</span><span class="v">Exhaust Air</span></div>
<div class="row g" style="top:408px"><div class="d"></div><div class="d2"></div><span class="l">System Name</span><span class="v">Mechanical Exhaust ...</span></div>
<div class="row g" style="top:426px"><div class="d"></div><div class="d2"></div><span class="l">System Abbreviation</span><span class="v"></span></div>
<div class="row" style="top:444px"><div class="d"></div><div class="d2"></div><div class="a" style="left:125px;top:4px;width:10px;height:10px;border:1px solid #d0d4da"></div><span class="l">Size Lock</span><span class="v"></span></div>
<div class="row g" style="top:462px"><div class="d"></div><div class="d2"></div><span class="l">Area</span><span class="v">22.943 m&sup2;</span></div>
<div class="sh" style="top:480px">Mechanical - Flow<svg class="a" style="left:239px;top:5px" width="8" height="9"><path d="M1 4L4 1L7 4M1 8L4 5L7 8" stroke="#f0f0f0" stroke-width="1.5" fill="none"/></svg></div>
<div class="row g" style="top:498px"><div class="d"></div><div class="d2"></div><span class="l">Section</span><span class="v">2</span></div>
<div class="row" style="top:516px"><div class="d"></div><div class="d2"></div><span class="l">Additional Flow</span><span class="v">0.00 L/s</span></div>
<div class="row g" style="top:534px"><div class="d"></div><div class="d2"></div><span class="l">Flow</span><span class="v">127.00 L/s</span></div>
<div class="row g" style="top:552px"><div class="d"></div><div class="d2"></div><span class="l">Hydraulic Diameter</span><span class="v">855.6</span></div>
<div class="row g" style="top:570px"><div class="d"></div><div class="d2"></div><span class="l">Relative Roughness</span><span class="v">0.000105</span></div>
<div class="row g" style="top:588px"><div class="d"></div><div class="d2"></div><span class="l">Reynolds number</span><span class="v">9402.435976</span></div>
<div class="row g" style="top:606px"><div class="d"></div><div class="d2"></div><span class="l">Velocity</span><span class="v">0.16 m/s</span></div>
<div class="row g" style="top:624px"><div class="d"></div><div class="d2"></div><span class="l">Velocity Pressure</span><span class="v">0.016358 Pa</span></div>
<div class="row g" style="top:642px"><div class="d"></div><div class="d2"></div><span class="l">Friction Factor</span><span class="v">0.032194</span></div>
<div class="row g" style="top:660px"><div class="d"></div><div class="d2"></div><span class="l">Friction</span><span class="v">0.0006 Pa/m</span></div>
<div class="row g" style="top:678px"><div class="d"></div><div class="d2"></div><span class="l">Pressure Drop</span><span class="v">0.003923 Pa</span></div>
<div class="row g" style="top:696px"><div class="d"></div><div class="d2"></div><div class="a" style="left:125px;top:4px;width:10px;height:10px;background:#5a6270"></div><svg class="a" style="left:126px;top:5px" width="9" height="8"><path d="M1 4L3.5 6.5L8 1" stroke="#8f97a2" stroke-width="1.4" fill="none"/></svg><span class="l">Critical Path</span><span class="v"></span></div>
<div class="sh" style="top:714px">Identity Data<svg class="a" style="left:239px;top:5px" width="8" height="9"><path d="M1 4L4 1L7 4M1 8L4 5L7 8" stroke="#f0f0f0" stroke-width="1.5" fill="none"/></svg></div>
<div class="row" style="top:732px"><div class="d"></div><div class="d2"></div><span class="l">Image</span><span class="v"></span></div>
<div class="row" style="top:750px"><div class="d"></div><div class="d2"></div><div class="a" style="left:243px;top:2px;width:8px;height:13px;border:1px solid #8f97a2"></div><span class="l">Comments</span><span class="v"></span></div>
<div class="row" style="top:768px"><div class="d"></div><div class="d2"></div><span class="l">Mark</span><span class="v"></span></div>
<div class="sh" style="top:786px">Phasing<svg class="a" style="left:239px;top:5px" width="8" height="9"><path d="M1 4L4 1L7 4M1 8L4 5L7 8" stroke="#f0f0f0" stroke-width="1.5" fill="none"/></svg></div>
<div class="row" style="top:804px"><div class="d"></div><div class="d2"></div><span class="l">Phase Created</span><span class="v">New Construction</span></div>
<div class="row" style="top:822px"><div class="d"></div><div class="d2"></div><span class="l">Phase Demolished</span><span class="v">None</span></div>
<div class="sh" style="top:840px">IFC Parameters<svg class="a" style="left:239px;top:5px" width="8" height="9"><path d="M1 4L4 1L7 4M1 8L4 5L7 8" stroke="#f0f0f0" stroke-width="1.5" fill="none"/></svg></div>
<div class="row" style="top:858px"><div class="d"></div><div class="d2"></div><span class="l">Export to IFC</span><span class="v">By Type</span></div>
<div class="row" style="top:876px"><div class="d"></div><div class="d2"></div><span class="l">Export to IFC As</span><span class="v"></span></div>
<div class="row" style="top:894px"><div class="d"></div><div class="d2"></div><span class="l">IFC Predefined Type</span><span class="v"></span></div>
<div class="row" style="top:912px"><div class="d"></div><div class="d2"></div><span class="l">IfcGUID</span><span class="v">3$iN1dvnHFnA3ZTS...</span></div>
<div class="sh" style="top:930px">Insulation<svg class="a" style="left:239px;top:5px" width="8" height="9"><path d="M1 4L4 1L7 4M1 8L4 5L7 8" stroke="#f0f0f0" stroke-width="1.5" fill="none"/></svg></div>
<div class="a" style="left:254px;top:119px;width:16px;height:828px;background:#2f3644"></div>
<svg class="a" style="left:257px;top:124px" width="10" height="6"><path d="M1 5L5 1L9 5" stroke="#6a7280" stroke-width="1.5" fill="none"/></svg>
<div class="a" style="left:258px;top:138px;width:7px;height:634px;background:#6e7888;border-radius:4px"></div>
<svg class="a" style="left:257px;top:936px" width="10" height="6"><path d="M1 1L5 5L9 1" stroke="#6a7280" stroke-width="1.5" fill="none"/></svg>
<div class="a" style="left:0;top:947px;width:273px;height:25px;background:#3b4354;border-top:1px solid #2f3644"></div>
<div class="a" style="left:2px;top:949px;width:20px;height:21px;background:#2c7bb0"></div>
<svg class="a" style="left:4px;top:952px" width="16" height="15"><path d="M2 3H9M2 6H9M2 9H9M2 12H9" stroke="#9fc8e8" stroke-width="1"/><path d="M12 2V13M10 4L12 2L14 4M10 11L12 13L14 11" stroke="#fff" stroke-width="1.3" fill="none"/></svg>
<div class="a" style="left:27px;top:949px;width:21px;height:21px;background:#434c5c"></div>
<svg class="a" style="left:29px;top:951px" width="17" height="17"><text x="1" y="8" font-size="8" fill="#6fb8e8" font-family="Liberation Sans" font-weight="bold">A</text><text x="1" y="16" font-size="8" fill="#6fb8e8" font-family="Liberation Sans" font-weight="bold">Z</text><path d="M12 2V14M10 12L12 15L14 12" stroke="#e0e0e0" stroke-width="1.4" fill="none"/></svg>
<div class="a" style="left:52px;top:949px;width:21px;height:21px;background:#434c5c"></div>
<svg class="a" style="left:54px;top:951px" width="17" height="17"><text x="1" y="8" font-size="8" fill="#6fb8e8" font-family="Liberation Sans" font-weight="bold">Z</text><text x="1" y="16" font-size="8" fill="#6fb8e8" font-family="Liberation Sans" font-weight="bold">A</text><path d="M12 2V14M10 12L12 15L14 12" stroke="#e0e0e0" stroke-width="1.4" fill="none"/></svg>
<div class="a" style="left:198px;top:951px;width:70px;height:18px;border:1px solid #555e6c;border-radius:2px"></div>
<div class="t" style="left:217px;top:953px;color:#6f7784">Apply</div>
</div>
<!-- 3D VIEW -->
<div class="a" style="left:273px;top:151px;width:4px;height:972px;background:#2a303b;border-left:1px solid #4e5666"></div>
<div class="a" style="left:957px;top:151px;width:6px;height:972px;background:#2a303b;border-left:1px solid #4e5666"></div>
<div class="a" style="left:1643px;top:151px;width:3px;height:972px;background:#2a303b;border-left:1px solid #4e5666"></div>
<div class="tabbar" style="left:277px;top:151px;width:680px"></div>
<div class="a" style="left:277px;top:151px;width:126px;height:21px;background:#3b4355"></div>
<svg class="a" style="left:281px;top:155px" width="16" height="15"><path d="M1 7L8 1L15 7V14H1Z" fill="#a8adb4"/><path d="M1 7L8 1L15 7" stroke="#c8ccd0" stroke-width="1.5" fill="none"/><rect x="5" y="9" width="4" height="5" fill="#5a5a48"/></svg>
<div class="t" style="left:303px;top:154px;color:#e6eaee">3D HVAC</div>
<svg class="a" style="left:409px;top:155px" width="16" height="15"><path d="M1 7L8 1L15 7V14H1Z" fill="#a8adb4"/><path d="M1 7L8 1L15 7" stroke="#c8ccd0" stroke-width="1.5" fill="none"/><rect x="5" y="9" width="4" height="5" fill="#5a5a48"/></svg>
<div class="t" style="left:431px;top:154px;color:#e6eaee">{3D}</div>
<svg class="a" style="left:537px;top:155px" width="16" height="15"><path d="M1 7L8 1L15 7V14H1Z" fill="#a8adb4"/><path d="M1 7L8 1L15 7" stroke="#c8ccd0" stroke-width="1.5" fill="none"/><rect x="5" y="9" width="4" height="5" fill="#5a5a48"/></svg>
<div class="t" style="left:559px;top:154px;color:#e6eaee">3D Coordination</div>
<svg class="a" style="left:943px;top:157px" width="10" height="8"><path d="M1 1H9" stroke="#aab0b8" stroke-width="1"/><path d="M1 3H9L5 7Z" fill="#aab0b8"/></svg>
<div class="vp" style="left:277px;top:173px;width:663px;height:932px" id="v3d"><!--v3d-start--><svg width="663" height="932" viewBox="277 173 663 932" style="position:absolute;left:0;top:0">
<g fill="none" stroke-linejoin="round" stroke-linecap="round">
<g stroke="#e23c3c" stroke-width="1.5" stroke-dasharray="7 5" fill="none">
<path d="M277,591 L356.8,562.5 L481.5,647 V1020.8 L277,1093"/>
<path d="M356.8,562.5 V928 M388,951.8 L481.5,1020.8"/>
</g>
<path d="M370.1,684.3 L811.3,521.1 L801.6,526 L691.8,567.5 Q677.9,572 677.9,585.6 V607.8 Q678,619 687.6,621.7 L746,666.2 L429.9,784.3 L370.1,742.6 Z" fill="#5a7fd7"/>
<path d="M370.1,684.3 L482,643 V742 L429.9,784.3 L370.1,742.6 Z" fill="#7191dd"/>
<path d="M370.1,684.3 L428.5,726 L429.9,784.3 L370.1,742.6 Z" fill="#7898e0"/>
<path d="M740.4,602.3 L801.6,578.7 V591.2 L798,593 L793.2,641.2 Z" fill="#5a7fd7"/>
<path d="M429.9,784.3 L746,666.2 L740,660 L429.9,778 Z" fill="#86a2e4"/>
<path d="M370.1,684.3 L811.3,521.1 M372,690 L700,568" stroke="#2040c8" stroke-width="1"/>
<path d="M370.1,742.6 L687,624.5 M428.5,726 L687,630 M429.9,784.3 L746,666.2 M740.4,602.3 L801.6,578.7" stroke="#1a2ec8" stroke-width="1.1"/>
<path d="M428.5,726 V784.3 M370.1,684.3 L428.5,726" stroke="#4a66c8" stroke-width="0.8"/>
<path d="M482.7,646 V742" stroke="#8090c8" stroke-width="1" stroke-dasharray="6 4"/>
<path d="M370.1,684.3 Q356,687 342.3,695.4 Q305,712 277,746.8" stroke="#2ad42a" stroke-width="1.2" />
<path d="M342.3,695.4 V782.2" stroke="#2ad42a" stroke-width="1.2" />
<path d="M370.1,684.3 V742.6 L342.3,782.2" stroke="#2ad42a" stroke-width="1.2" />
<path d="M370.1,742.6 L429.9,784.3" stroke="#2ad42a" stroke-width="1.2" />
<path d="M429.9,784.3 L410.8,814.7 Q403,821 401.2,824.2 Q392,830 391.7,838 V856" stroke="#2ad42a" stroke-width="1.2" />
<path d="M342.3,782.2 Q331,790 331,802 L277,820" stroke="#2ad42a" stroke-width="1.2" />
<path d="M331,802 V812.5" stroke="#2ad42a" stroke-width="1.2" />
<path d="M344,785 L401.2,824.2" stroke="#2ad42a" stroke-width="1.2" />
<path d="M331,801.3 L391.7,833.8" stroke="#2ad42a" stroke-width="1.2" />
<path d="M331,814.7 L389.8,854.8" stroke="#2ad42a" stroke-width="1.2" />
<path d="M277,831 L321,817" stroke="#2ad42a" stroke-width="1.2" />
<path d="M811.3,521.1 Q829,513 846,517.5 Q869,527 871,560.6" stroke="#2ad42a" stroke-width="1.2" />
<path d="M846,517.5 Q905,548 925,575 Q933,590 933.6,602.3" stroke="#2ad42a" stroke-width="1.2" />
<path d="M850.2,570.3 L871,562 L933.6,602.3" stroke="#2ad42a" stroke-width="1.2" />
<path d="M871,562 L873.8,613.4" stroke="#2ad42a" stroke-width="1.2" />
<path d="M850.2,621.7 L873.8,613.4 L910,606.5 L940,617.6" stroke="#2ad42a" stroke-width="1.2" />
<path d="M879.4,616.2 V674.6" stroke="#2ad42a" stroke-width="1.2" />
<path d="M850.2,677.3 Q868,678 879.4,674.6" stroke="#2ad42a" stroke-width="1.2" />
<path d="M879.4,674.6 L940,713.5" stroke="#2ad42a" stroke-width="1.2" />
<path d="M908.6,606.5 V663.4 L940,680" stroke="#2ad42a" stroke-width="1.2" />
<path d="M879.4,674.6 Q885,712 915.5,719 Q932,720 940,713.5" stroke="#2ad42a" stroke-width="1.2" />
<path d="M862.7,694 L910,722" stroke="#2ad42a" stroke-width="1.2" />
<path d="M911.3,610.6 L940,620.4 V678.7 L911.3,660.7 Z" fill="#0ee00e" stroke="#2ad42a" stroke-width="1"/>
<path d="M277,827.4 L326.5,817 L388,856" stroke="#1a1a1a" stroke-width="1.1" />
<path d="M277,838 L326.5,824.5 L385,859" stroke="#1a1a1a" stroke-width="1.1" />
<path d="M320.5,820 V943 M326.5,818 V940 M379,851 V940 M386.4,856 V985" stroke="#1a1a1a" stroke-width="1.1" />
<path d="M340,835 L350.4,922 M367,847 L356.4,928 M377,862 L366,928" stroke="#1a1a1a" stroke-width="1.1" />
<path d="M277,931 L320.5,914.4 L326.5,916 L379,940" stroke="#1a1a1a" stroke-width="1.1" />
<path d="M277,937 L320.5,921 L379,946" stroke="#1a1a1a" stroke-width="1.1" />
<path d="M322,972 L353,992 L355,1000" stroke="#1a1a1a" stroke-width="1.1" />
<path d="M277,960 L300,950" stroke="#1a1a1a" stroke-width="1.1" />
<path d="M277,930.3 L320.1,913.7 L326.3,912.3 L354.8,929" stroke="#1a1a1a" stroke-width="1.1" />
<path d="M331.2,972 L366,991.5" stroke="#1a1a1a" stroke-width="1.1" />
<path d="M325.6,981.8 L354.8,998.4" stroke="#1a1a1a" stroke-width="1.1" />
<path d="M366.6,954 V987" stroke="#1a1a1a" stroke-width="1.1" />
<path d="M381.2,953 V982 M386.8,953 V985" stroke="#1a1a1a" stroke-width="1.1" />
<path d="M301,1011.8 L329.5,1007.3 L356.4,1025.3 V1038 M293.5,1020.8 V1032 M301,1011.8 L293.5,1020.8" stroke="#1a1a1a" stroke-width="1.1" />
<path d="M284.5,1040.3 L329.5,1023.8 L365.4,1043.3 L320.5,1062.8 Z" fill="#fff" stroke="#1a1a1a" stroke-width="1.2"/>
<path d="M290,1041 L329,1027 L360,1043.5 L320.5,1059 Z" fill="none" stroke="#1a1a1a" stroke-width="0.8"/>
<path d="M295,1041.8 L328,1029.8 L353.4,1044.8 L319,1056.8 Z" fill="#111"/>
<path d="M292,1038 L277,1046" stroke="#e06030" stroke-width="0.8" />
<path d="M277,726 L296.5,723.2" stroke="#d414d4" stroke-width="1.15" />
<path d="M438.3,755.8 V806.1 L411,815.7" stroke="#d414d4" stroke-width="1.15" />
<path d="M424.3,797.2 L438.3,806.1" stroke="#d414d4" stroke-width="1.15" />
<path d="M462.7,771.4 L544.7,829" stroke="#d414d4" stroke-width="1.15" />
<path d="M438.3,806.1 L546.9,882.1" stroke="#d414d4" stroke-width="1.15" />
<path d="M544.7,830.4 V793.5 Q545.5,767 570.5,765.5 Q591,767 589.7,780 Q588,792 579.4,796.5 V833" stroke="#d414d4" stroke-width="1.15" />
<path d="M544.7,793.5 Q553,786 564.6,787.6 Q576.4,788.4 579.4,796.5" stroke="#d414d4" stroke-width="1.15" />
<path d="M589.7,774.3 L634.2,802.8" stroke="#d414d4" stroke-width="1.15" />
<path d="M579.4,806.8 L621.7,837.2" stroke="#d414d4" stroke-width="1.15" />
<path d="M526.2,844.5 L567.6,829 L597.1,850.4 L555.8,864.4 Z" stroke="#d414d4" stroke-width="1.15" />
<path d="M547.7,860 V882.1 M555.8,864.4 V888.8 M592.7,852 V879.2" stroke="#d414d4" stroke-width="1.15" />
<path d="M501.1,900 L546.9,882.1" stroke="#d414d4" stroke-width="1.15" />
<path d="M555.8,888.8 L592.7,879.2 L596.7,877.8" stroke="#d414d4" stroke-width="1.15" />
<path d="M592.7,857 L596.7,850.7" stroke="#d414d4" stroke-width="1.15" />
<path d="M580,857 L596.7,850.7" stroke="#d414d4" stroke-width="1.15" />
<path d="M592.5,877.8 L679.1,848.6" stroke="#d414d4" stroke-width="1.15" />
<path d="M592.5,850 V880" stroke="#d414d4" stroke-width="1.15" />
<path d="M380,882.1 L414,900" stroke="#d414d4" stroke-width="1.15" />
<path d="M386.8,881.7 L427.1,910.9 L442.4,922 V934.5" stroke="#d414d4" stroke-width="1.15" />
<path d="M399.3,922 L427.1,910.9" stroke="#d414d4" stroke-width="1.15" />
<path d="M442.4,922 L497,901.2" stroke="#d414d4" stroke-width="1.15" />
<path d="M448,926.2 L497,910.9" stroke="#d414d4" stroke-width="1.15" />
<path d="M442.4,934.5 L471.6,955.4" stroke="#d414d4" stroke-width="1.15" />
<path d="M634.2,802.8 L683.2,784.5 Q705,777 734,788 Q758,800 760.4,819.4" stroke="#d414d4" stroke-width="1.15" />
<path d="M683.2,784.5 Q677,796 689.5,810 Q705,820 722.9,818.4 Q738,814 739.5,792" stroke="#d414d4" stroke-width="1.15" />
<path d="M724,821.5 Q742,822 744.8,797.5" stroke="#d414d4" stroke-width="1.15" />
<path d="M634.2,802.8 Q636,822 651,833" stroke="#d414d4" stroke-width="1.15" />
<path d="M634.2,816 L631.1,837.2 L645.7,836.1" stroke="#d414d4" stroke-width="1.15" />
<path d="M650.9,832 L694.7,816.3 Q712,812 724,821.5 Q727,826 728.1,830.9" stroke="#d414d4" stroke-width="1.15" />
<path d="M678,823.6 V848.6" stroke="#d414d4" stroke-width="1.15" />
<path d="M683.2,821.5 L706.2,839.2" stroke="#d414d4" stroke-width="1.15" />
<path d="M632.1,845.5 L636.3,863.2" stroke="#d414d4" stroke-width="1.15" />
<path d="M632.1,845.5 Q644,850 652,843 Q657,836 656,830" stroke="#d414d4" stroke-width="1.15" />
<path d="M590.4,773.6 Q595,790 580,797" stroke="#d414d4" stroke-width="1.15" />
<path d="M634.2,816 Q630,830 614,830 Q598,830 580,808" stroke="#d414d4" stroke-width="1.15" />
<path d="M729.9,874 V999.8 M764.4,868 V1014.8" stroke="#d414d4" stroke-width="1.15" />
<path d="M692.3,896.9 L705.6,906.5" stroke="#d414d4" stroke-width="1.15" />
<path d="M792.9,969.8 L826,991" stroke="#d414d4" stroke-width="1.15" />
<path d="M873.8,963.8 L940,1002.8 M873.8,1025.3 L940,1071.8" stroke="#d414d4" stroke-width="1.15" />
<path d="M676.1,1079.5 L714.2,1061.8 L746.1,1084.8 L704.5,1099.9 Z" stroke="#d414d4" stroke-width="1.15" />
<path d="M686.8,1062.8 V1074 M714.2,1052 V1061.8 M733.7,1055.6 V1075 M686.8,1062.8 L714.2,1052 L733.7,1062" stroke="#d414d4" stroke-width="1.15" />
<path d="M734.6,1055.6 L803.6,1105" stroke="#d414d4" stroke-width="1.15" />
<path d="M737,1054 L806,1103" stroke="#d414d4" stroke-width="1.15" />
<path d="M600,1068 L651.4,1105" stroke="#d414d4" stroke-width="1.15" />
<path d="M343,1011.8 Q350,990 380,980 Q405,975 411.9,987.8 Q420,1000 415,1010" stroke="#d414d4" stroke-width="1.15" />
<path d="M346,1020 Q356,1000 385,992 Q402,990 405,1000" stroke="#d414d4" stroke-width="1.15" />
<path d="M370,1008.8 L421,990.8 L441.9,1016.3 L397,1029.8 Z" stroke="#d414d4" stroke-width="1.15" />
<path d="M380,1027.5 L492.5,1105 M380,1043.8 L467.5,1105 M380,1062.5 L435,1105" stroke="#d414d4" stroke-width="1.15" />
<path d="M358,1029.8 L380,1043.8 M370,1020.8 L380,1027.5" stroke="#d414d4" stroke-width="1.15" />
<path d="M517.5,1073.8 L552.5,1096.3 M577.5,1052.5 L620,1082.5" stroke="#d414d4" stroke-width="1.15" />
<path d="M346,1022.0 Q352,1008 360,1012.0" stroke="#d414d4" stroke-width="0.8" />
<path d="M353,1018.5 Q359,1006 367,1010.8" stroke="#d414d4" stroke-width="0.8" />
<path d="M360,1015.0 Q366,1004 374,1009.6" stroke="#d414d4" stroke-width="0.8" />
<path d="M367,1011.5 Q373,1002 381,1008.4" stroke="#d414d4" stroke-width="0.8" />
<path d="M374,1008.0 Q380,1000 388,1007.2" stroke="#d414d4" stroke-width="0.8" />
<path d="M381,1004.5 Q387,998 395,1006.0" stroke="#d414d4" stroke-width="0.8" />
<path d="M388,1001.0 Q394,996 402,1004.8" stroke="#d414d4" stroke-width="0.8" />
<path d="M395,997.5 Q401,994 409,1003.6" stroke="#d414d4" stroke-width="0.8" />
<path d="M402,994.0 Q408,992 416,1002.4" stroke="#d414d4" stroke-width="0.8" />
<path d="M691.8,567.5 L801.6,525.9" stroke="#1a1ac0" stroke-width="1.15" />
<path d="M691.8,567.5 Q677.9,572 677.9,585.6 V607.8 Q678,619 687.6,621.7" stroke="#1a1ac0" stroke-width="1.15" />
<path d="M691.8,567.5 V595.3" stroke="#1a1ac0" stroke-width="1.15" />
<path d="M680.7,603.7 L829.3,545.3" stroke="#1a1ac0" stroke-width="1.15" />
<path d="M712.6,609.2 L801.6,578.7" stroke="#1a1ac0" stroke-width="1.15" />
<path d="M687.6,621.7 L940,796.8" stroke="#1a1ac0" stroke-width="1.15" />
<path d="M712.6,609.2 L793.2,666.2" stroke="#1a1ac0" stroke-width="1.15" />
<path d="M834.9,698.2 L940,769" stroke="#1a1ac0" stroke-width="1.15" />
<path d="M910,721.8 L940,741" stroke="#1a1ac0" stroke-width="1.15" />
<path d="M801.6,687 V526 Q803,521 812,523 L829,530 Q849,542 850.2,560 V691.2 L818.2,702.3 Z" stroke="#1a1ac0" stroke-width="1.15" />
<path d="M829.3,544 V677.3 L801.6,687 M829.3,677.3 L850.2,691.2" stroke="#1a1ac0" stroke-width="1.15" />
<path d="M801.6,553 L829.3,544 L850.2,557" stroke="#1a1ac0" stroke-width="1.15" />
<path d="M801.6,586 L829.3,577.3 L850.2,590" stroke="#1a1ac0" stroke-width="1.15" />
<path d="M794.6,599.5 V689.8 L815,701" stroke="#1a1ac0" stroke-width="1.15" />
<path d="M796,598 V688" stroke="#1a1ac0" stroke-width="1.15" />
<path d="M491.7,929.5 Q492.5,918 505.6,915.6 L809.3,802" stroke="#1a1ac0" stroke-width="1.15" />
<path d="M491.7,929.5 V954.7 Q492,966 498.7,969.5" stroke="#1a1ac0" stroke-width="1.15" />
<path d="M505.6,915.6 V945.1" stroke="#1a1ac0" stroke-width="1.15" />
<path d="M491.7,954.7 Q496,946 505.6,945.1" stroke="#1a1ac0" stroke-width="1.15" />
<path d="M505.6,945.1 L770.4,847" stroke="#1a1ac0" stroke-width="1.15" />
<path d="M498.7,969.5 L798.8,868" stroke="#1a1ac0" stroke-width="1.15" />
<path d="M569,959 L728.5,899.1 M764.4,884.4 L824.3,863.4" stroke="#1a1ac0" stroke-width="1.15" />
<path d="M616,992.9 L728.5,950 M764.4,935.4 L824.3,914.4" stroke="#1a1ac0" stroke-width="1.15" />
<path d="M764.4,978.8 L824.3,957.8" stroke="#1a1ac0" stroke-width="1.15" />
<path d="M505.6,945.1 L600,1011.4" stroke="#1a1ac0" stroke-width="1.15" />
<path d="M498.7,969.5 L600,1041.5" stroke="#1a1ac0" stroke-width="1.15" />
<path d="M553.4,949.5 L600,981.8" stroke="#1a1ac0" stroke-width="1.15" />
<path d="M783.9,811 V838 M809.3,802 V830.4 M830.3,814 V843.9" stroke="#1a1ac0" stroke-width="1.15" />
<path d="M783.9,811 L809.3,802 L830.3,814 M783.9,838 L809.3,830.4 L830.3,843.9" stroke="#1a1ac0" stroke-width="1.15" />
<path d="M770.4,847 L809.3,830.4 L840.8,853 L798.8,868 Z" stroke="#1a1ac0" stroke-width="1.15" />
<path d="M825.8,870 V1059.8 M854.3,863.4 V1105 M873.8,859 V1090" stroke="#1a1ac0" stroke-width="1.15" />
<path d="M825.8,870 Q826,856 840,850 Q856,844 866,848 Q873.8,852 873.8,865" stroke="#1a1ac0" stroke-width="1.15" />
<path d="M854.3,863.4 L873.8,876" stroke="#1a1ac0" stroke-width="1.15" />
<path d="M873.8,847 L940,820 M873.8,877 L940,850 M873.8,939.9 L940,912.9" stroke="#1a1ac0" stroke-width="1.15" />
<path d="M873.8,874 L930.7,918.9 M873.8,904 L906.8,927.9" stroke="#1a1ac0" stroke-width="1.15" />
<path d="M873.8,1090 Q873,1102 866,1105" stroke="#1a1ac0" stroke-width="1.15" />
<path d="M600,983 L656.7,1021.1" stroke="#1a1ac0" stroke-width="1.15" />
<path d="M656.7,1021.1 L704.5,1004.3 Q727.5,999 752.3,1009.6" stroke="#1a1ac0" stroke-width="1.15" />
<path d="M704.5,1004.3 V1033.5" stroke="#1a1ac0" stroke-width="1.15" />
<path d="M752.3,1009.6 V1037" stroke="#1a1ac0" stroke-width="1.15" />
<path d="M656.7,1051.2 L704.5,1033.5 Q727.5,1027 752.3,1037" stroke="#1a1ac0" stroke-width="1.15" />
<path d="M600,1011.4 L656.7,1051.2 L676.1,1066.3" stroke="#1a1ac0" stroke-width="1.15" />
<path d="M600,1041.5 L630.1,1061 Q650,1070 676.1,1066.3 L752.3,1037" stroke="#1a1ac0" stroke-width="1.15" />
<path d="M629.2,1061 L656.7,1051.2" stroke="#1a1ac0" stroke-width="1.15" />
<path d="M704.5,1033.5 L727.5,1048.5 L752.3,1037.9" stroke="#1a1ac0" stroke-width="1.15" />
<path d="M752.3,1009.6 L872.7,1091" stroke="#1a1ac0" stroke-width="1.15" />
<path d="M727.5,1048.5 L803.6,1105" stroke="#1a1ac0" stroke-width="1.15" />
<path d="M752.3,1037.9 L851.5,1105" stroke="#1a1ac0" stroke-width="1.15" />
<path d="M825.8,1059.2 L873.6,1091" stroke="#1a1ac0" stroke-width="1.15" />
<path d="M277,957.8 L374.4,924.9 Q380,921.9 397,921.9 Q416.4,925 416.4,939.9" stroke="#1a1ac0" stroke-width="1.15" />
<path d="M374.4,924.9 V939.9" stroke="#1a1ac0" stroke-width="1.15" />
<path d="M277,975.8 L374.4,939.9 Q396,934 416.4,939.9" stroke="#1a1ac0" stroke-width="1.15" />
<path d="M277,990.8 L388,949.8" stroke="#1a1ac0" stroke-width="1.15" />
<path d="M416.4,933.9 L567.5,1035 V1048.8" stroke="#1a1ac0" stroke-width="1.15" />
<path d="M416.4,942 L566.3,1048.8" stroke="#1a1ac0" stroke-width="1.15" />
<path d="M388,949.8 L510,1031.9" stroke="#1a1ac0" stroke-width="1.15" />
<path d="M547.5,1056.3 L566.3,1050" stroke="#1a1ac0" stroke-width="1.15" />
<path d="M433.8,1008.8 L462.5,998.1" stroke="#1a1ac0" stroke-width="1.15" />
<path d="M432.5,1061.3 L510,1031.9" stroke="#1a1ac0" stroke-width="1.15" />
<path d="M472.5,1090 L552.5,1058.1" stroke="#1a1ac0" stroke-width="1.15" />
<path d="M380,1081.3 L396.3,1075" stroke="#1a1ac0" stroke-width="1.15" />
<path d="M546.3,1018.8 L558.8,1013.8" stroke="#1a1ac0" stroke-width="1.15" />
<path d="M576.3,1051.3 L600,1041.3" stroke="#1a1ac0" stroke-width="1.15" />
<path d="M325,1105 L432.5,1061.3" stroke="#1a1ac0" stroke-width="1.15" />
<path d="M615.5,992.1 L600,981.8" stroke="#1a1ac0" stroke-width="1.15" />
<path d="M685.7,1010 L728.5,993.6" stroke="#1a1ac0" stroke-width="1.15" />
<path d="M656.7,1021.1 V1051.2" stroke="#1a1ac0" stroke-width="2.0" />
<path d="M567.5,1036 Q580,1060 574,1080 Q568,1095 568,1105" stroke="#1a1ac0" stroke-width="1.1" />
<path d="M560,1045 Q570,1062 563,1080 Q557,1095 558,1105" stroke="#1a1ac0" stroke-width="1.1" />
<path d="M561.0,1042 Q566,1046 577,1043" stroke="#1a1ac0" stroke-width="1" />
<path d="M560.8,1048 Q566,1052 577,1049" stroke="#1a1ac0" stroke-width="1" />
<path d="M560.6,1054 Q566,1058 577,1055" stroke="#1a1ac0" stroke-width="1" />
<path d="M560.4,1060 Q566,1064 577,1061" stroke="#1a1ac0" stroke-width="1" />
<path d="M560.2,1066 Q566,1070 573.4,1067" stroke="#1a1ac0" stroke-width="1" />
<path d="M560.0,1072 Q566,1076 573.0,1073" stroke="#1a1ac0" stroke-width="1" />
<path d="M559.8,1078 Q566,1082 572.6,1079" stroke="#1a1ac0" stroke-width="1" />
<path d="M559.6,1084 Q566,1088 572.2,1085" stroke="#1a1ac0" stroke-width="1" />
<path d="M559.4,1090 Q566,1094 571.8,1091" stroke="#1a1ac0" stroke-width="1" />
<path d="M559.2,1096 Q566,1100 571.4,1097" stroke="#1a1ac0" stroke-width="1" />
<path d="M559.0,1102 Q566,1106 571.0,1103" stroke="#1a1ac0" stroke-width="1" />
</g>
<g>
<ellipse cx="855.5" cy="275" rx="58" ry="23.5" fill="none" stroke="#f2f2f2" stroke-width="8.5"/>
<ellipse cx="855.5" cy="275" rx="66" ry="28" fill="none" stroke="#cccccc" stroke-width="0.9" stroke-dasharray="3 1.5"/>
<ellipse cx="855.5" cy="275" rx="50" ry="19.5" fill="none" stroke="#cccccc" stroke-width="0.9" stroke-dasharray="3 1.5"/>
<path d="M825.2,234.1 L861,220.5 L861,259 L823.3,272.6 Z" fill="#ededed" stroke="#9a9a9a" stroke-width="0.9"/>
<path d="M861,220.5 L886.2,240.2 L888,278 L861,259 Z" fill="#e2e2e2" stroke="#9a9a9a" stroke-width="0.9"/>
<path d="M823.3,272.6 L861,259 L888,278 L852.1,290.5 Z" fill="#d6d6d6" stroke="#9a9a9a" stroke-width="0.9"/>
<text transform="translate(834,253) rotate(-22)" font-family="Liberation Mono" font-size="9" font-weight="bold" fill="#7a7a7a">LEFT</text>
<path d="M825,249 Q843,243 861,245 Q875,246 887,249 M825,257 Q843,251 861,254 Q875,255 887,258" stroke="#c0c0c0" stroke-width="0.8" fill="none" stroke-dasharray="2 1.5"/>
<text transform="translate(866,241) rotate(38)" font-family="Liberation Mono" font-size="7.5" font-weight="bold" fill="#7a7a7a">FRONT</text>
<text transform="translate(840,268) rotate(30)" font-family="Liberation Mono" font-size="8.5" font-weight="bold" fill="#8a8a8a">BOTTOM</text>
<path d="M803,254 L814,247 L822,254 L810,259 Z" fill="none" stroke="#c8c8c8" stroke-width="0.8" stroke-dasharray="2 1"/>
<text transform="translate(897,265) rotate(-25)" font-family="Liberation Sans" font-size="7" fill="#c4c4c4">S</text>
<text transform="translate(802,296) rotate(0)" font-family="Liberation Sans" font-size="6" fill="#c4c4c4">N</text>
<text transform="translate(880,298) rotate(-10)" font-family="Liberation Sans" font-size="6" fill="#c4c4c4">E</text>
</g>
<rect x="904.5" y="332" width="33.5" height="116.5" rx="4" fill="#f4f4f4" stroke="#c4c4c4" stroke-width="1.5"/>
<circle cx="931" cy="339" r="3.5" fill="none" stroke="#b0b0b0" stroke-width="1.2"/><circle cx="931" cy="441.4" r="3.5" fill="none" stroke="#b0b0b0" stroke-width="1.2"/>
<rect x="910" y="352" width="22" height="22" rx="7" fill="none" stroke="#9a9a9a" stroke-width="1.3"/><circle cx="921" cy="363.5" r="6.5" fill="none" stroke="#9a9a9a" stroke-width="1.3"/>
<path d="M918,382 L924,382 L921,386 Z" fill="#888"/><path d="M911,390.5 H932" stroke="#c8c8c8"/>
<rect x="913" y="399" width="10" height="9" fill="#8fd08f"/><circle cx="924" cy="409" r="3.5" fill="none" stroke="#777" stroke-width="1.2"/><path d="M926.5,411.5 L929,414" stroke="#777" stroke-width="1.5"/>
<path d="M918,424 L924,424 L921,428 Z" fill="#888"/>
</svg><!--v3d-end--></div>
<div class="a" style="left:940px;top:172px;width:17px;height:933px;background:#2f3644"></div>
<svg class="a" style="left:944px;top:178px" width="10" height="6"><path d="M1 5L5 1L9 5" stroke="#7a828e" stroke-width="1.5" fill="none"/></svg>
<div class="a" style="left:941px;top:189px;width:15px;height:1px;background:#454d5b"></div>
<div class="a" style="left:945px;top:630px;width:7px;height:18px;background:#8a94a2;border-radius:3px"></div>
<svg class="a" style="left:944px;top:1093px" width="10" height="6"><path d="M1 1L5 5L9 1" stroke="#7a828e" stroke-width="1.5" fill="none"/></svg>
<div class="vcb" style="left:277px;top:1105px;width:680px;border-top:1px solid #2d3440"></div>
<div class="t" style="left:304px;top:1107px;color:#e6eaee;font-size:12px">1 : 50</div>
<svg class="a" style="left:360px;top:1106px" width="18" height="17"><rect x="1" y="2" width="16" height="12" fill="#b0b0b0"/><path d="M1 2h4v4h-4zM9 2h4v4h-4zM5 6h4v4h-4zM13 6h4v4h-4zM1 10h4v4h-4zM9 10h4v4h-4z" fill="#d8d8d8"/></svg>
<svg class="a" style="left:386px;top:1106px" width="18" height="17"><path d="M1 6L5 2H14V11L10 15H1Z" fill="none" stroke="#e6e6e6" stroke-width="1.2"/><path d="M1 6H10V15M10 6L14 2" stroke="#e6e6e6" stroke-width="1.2" fill="none"/></svg>
<svg class="a" style="left:411px;top:1106px" width="18" height="17"><circle cx="7" cy="7" r="4" fill="#f0c860"/><path d="M7 0V2M0 7H2M2 2L3.5 3.5M12 2L10.5 3.5" stroke="#f0c860"/><circle cx="13" cy="11" r="3.5" fill="#6fd0e0"/><rect x="11.5" y="14" width="3" height="3" fill="#fff"/></svg>
<svg class="a" style="left:437px;top:1106px" width="18" height="17"><circle cx="8" cy="6" r="5" fill="#9a9ea4"/><circle cx="13" cy="10" r="4" fill="#8a8e94"/><rect x="2" y="13" width="9" height="3" fill="#222"/><rect x="13" y="13" width="3" height="3" fill="#8a8e94"/></svg>
<svg class="a" style="left:463px;top:1106px" width="18" height="17"><path d="M2 5H12L14 3V8L11 12H4Z" fill="#c8c8c8"/><circle cx="13" cy="10" r="3.5" fill="#6fd0e0"/><rect x="11.5" y="14" width="3" height="3" fill="#fff"/></svg>
<svg class="a" style="left:489px;top:1106px" width="18" height="17"><path d="M1 8H5M8 3V14H16" stroke="#6fb8e8" stroke-width="1.3" stroke-dasharray="2 1" fill="none"/><path d="M10 10L15 15M15 10L10 15" stroke="#e04545" stroke-width="1.8"/></svg>
<svg class="a" style="left:515px;top:1106px" width="18" height="17"><path d="M1 8H5M8 3V14H16" stroke="#6fb8e8" stroke-width="1.3" stroke-dasharray="2 1" fill="none"/><circle cx="13" cy="10" r="3.5" fill="#6fd0e0"/><rect x="11.5" y="14" width="3" height="3" fill="#fff"/></svg>
<svg class="a" style="left:542px;top:1106px" width="18" height="17"><path d="M1 8L8 1L15 8V16H1Z" fill="#d8d8d8"/><rect x="8" y="9" width="8" height="7" fill="#4aa8d8"/></svg>
<svg class="a" style="left:569px;top:1106px" width="18" height="17"><circle cx="4" cy="10" r="3" fill="none" stroke="#b8bcc2" stroke-width="1.5"/><circle cx="12" cy="10" r="3" fill="none" stroke="#b8bcc2" stroke-width="1.5"/><path d="M4 7L6 3M12 7L10 3" stroke="#b8bcc2" stroke-width="1.2"/></svg>
<svg class="a" style="left:596px;top:1106px" width="18" height="17"><circle cx="8" cy="7" r="5" fill="#6fd0e0"/><rect x="6" y="12" width="4" height="4" fill="#fff"/></svg>
<svg class="a" style="left:620px;top:1106px" width="18" height="17"><rect x="1" y="2" width="9" height="8" fill="#d0d0d0"/><rect x="5" y="6" width="9" height="9" fill="none" stroke="#e0e0e0" stroke-dasharray="2 1"/></svg>
<svg class="a" style="left:647px;top:1106px" width="18" height="17"><path d="M2 6L8 3L14 5V13L8 15L2 13Z" fill="#6fb8e8"/><path d="M8 7V15" stroke="#4a80b0"/></svg>
<svg class="a" style="left:671px;top:1106px" width="18" height="17"><path d="M1 1V8M15 1V8M2 4H14" stroke="#e0e0e0" stroke-width="1.2"/><path d="M1 9V14H9" stroke="#e0e0e0" stroke-dasharray="2 1" fill="none"/><circle cx="13" cy="11" r="3.5" fill="#6fd0e0"/><rect x="11.5" y="14" width="3" height="3" fill="#fff"/></svg>
<svg class="a" style="left:699px;top:1109px" width="7" height="10"><path d="M6 1L2 5L6 9" stroke="#8a929e" stroke-width="1.4" fill="none"/></svg>
<div class="a" style="left:709px;top:1106px;width:216px;height:16px;background:#313845"></div>
<div class="a" style="left:808px;top:1110px;width:18px;height:8px;background:#8a94a2;border-radius:4px"></div>
<svg class="a" style="left:930px;top:1109px" width="7" height="10"><path d="M1 1L5 5L1 9" stroke="#8a929e" stroke-width="1.4" fill="none"/></svg>
<svg class="a" style="left:945px;top:1111px" width="8" height="8"><rect x="5" y="1" width="2" height="2" fill="#8a929e"/><rect x="5" y="5" width="2" height="2" fill="#8a929e"/><rect x="1" y="5" width="2" height="2" fill="#8a929e"/></svg>
<div class="tabbar" style="left:962px;top:151px;width:681px"></div>
<div class="a" style="left:962px;top:151px;width:167px;height:21px;background:#232935"></div>
<svg class="a" style="left:967px;top:154px" width="16" height="15"><rect x="1" y="1" width="7" height="12" fill="#dcdcdc"/><rect x="7" y="3" width="7" height="12" fill="#e6e6e6"/><path d="M7 3V13" stroke="#999" stroke-dasharray="1 1"/></svg>
<div class="t" style="left:989px;top:154px;color:#f4f6f8;font-weight:bold">01 Kratownica sp&oacute;d</div>
<svg class="a" style="left:1108px;top:156px" width="11" height="11"><path d="M1 1L10 10M10 1L1 10" stroke="#c8ccd2" stroke-width="1.5"/></svg>
<svg class="a" style="left:1629px;top:157px" width="10" height="8"><path d="M1 1H9" stroke="#aab0b8" stroke-width="1"/><path d="M1 3H9L5 7Z" fill="#aab0b8"/></svg>
<div class="vp" style="left:963px;top:173px;width:662px;height:932px" id="vpl"><!--vpl-start--><svg width="662" height="932" viewBox="963 173 662 932" style="position:absolute;left:0;top:0">
<g fill="none">
<path d="M1093.5,412.5 H1625 M1097.5,416.7 H1625 M1101,418.8 H1625" stroke="#a8a8a8" stroke-width="0.9" />
<path d="M1093.5,913 H1625 M1097.5,908.5 H1625 M1101,906.2 H1625" stroke="#a8a8a8" stroke-width="0.9" />
<path d="M1093.5,412.5 V913 M1097.5,416.7 V908.5" stroke="#a8a8a8" stroke-width="0.9" />
<path d="M1105,420 V906" stroke="#a8a8a8" stroke-width="0.8" />
<path d="M1579.7,418 V906 M1585,418 V906 M1341,418 V906 M1344,418 V906" stroke="#b8b8b8" stroke-width="0.8" />
<path d="M1112,412.5 V416.7 M1139,412.5 V416.7 M1166,412.5 V416.7 M1193,412.5 V416.7 M1220,412.5 V416.7 M1247,412.5 V416.7 M1274,412.5 V416.7 M1301,412.5 V416.7 M1328,412.5 V416.7 M1355,412.5 V416.7 M1382,412.5 V416.7 M1409,412.5 V416.7 M1436,412.5 V416.7 M1463,412.5 V416.7 M1490,412.5 V416.7 M1517,412.5 V416.7 M1544,412.5 V416.7 M1571,412.5 V416.7 M1598,412.5 V416.7" stroke="#a8a8a8" stroke-width="0.8" />
<path d="M1112,908.5 V913 M1139,908.5 V913 M1166,908.5 V913 M1193,908.5 V913 M1220,908.5 V913 M1247,908.5 V913 M1274,908.5 V913 M1301,908.5 V913 M1328,908.5 V913 M1355,908.5 V913 M1382,908.5 V913 M1409,908.5 V913 M1436,908.5 V913 M1463,908.5 V913 M1490,908.5 V913 M1517,908.5 V913 M1544,908.5 V913 M1571,908.5 V913 M1598,908.5 V913" stroke="#a8a8a8" stroke-width="0.8" />
<path d="M1090,409 h6 v6 h-6 Z M1090,910 h6 v6 h-6 Z" stroke="#a8a8a8" stroke-width="0.8" />
<path d="M1095,560 h5 v10 h-5 Z M1095,720 h5 v10 h-5 Z M1339,560 h5 v10 h-5 Z M1339,880 h5 v10 h-5 Z M1578,490 h6 v10 h-6 Z M1578,815 h6 v10 h-6 Z" stroke="#a8a8a8" stroke-width="0.8" />
<path d="M1105,423.5 L1342,667 M1338.5,423.5 L1104,665 M1105,899 L1326,680 M1104,664.6 L1334.4,894.8" stroke="#9a9a9a" stroke-width="0.9" />
<path d="M1101.8,272.7 V988" stroke="#111" stroke-width="1.0" stroke-dasharray="14 3 2 3"/>
<path d="M1262.4,272.7 V988" stroke="#111" stroke-width="1.0" stroke-dasharray="14 3 2 3"/>
<path d="M1342.3,272.7 V988" stroke="#111" stroke-width="1.0" stroke-dasharray="14 3 2 3"/>
<path d="M1582.2,272.7 V988" stroke="#111" stroke-width="1.0" stroke-dasharray="14 3 2 3"/>
<path d="M965,422.2 H1625" stroke="#111" stroke-width="1.0" stroke-dasharray="14 3 2 3"/>
<path d="M965,583.3 H1625" stroke="#111" stroke-width="1.0" stroke-dasharray="14 3 2 3"/>
<path d="M965,743.3 H1625" stroke="#111" stroke-width="1.0" stroke-dasharray="14 3 2 3"/>
<path d="M965,903.5 H1625" stroke="#111" stroke-width="1.0" stroke-dasharray="14 3 2 3"/>
<circle cx="1102.5" cy="263.4" r="9.2" stroke="#111" stroke-width="1" fill="#fff"/>
<text x="1102.5" y="267" font-family="Liberation Sans" font-size="9" fill="#222" text-anchor="middle">1</text>
<circle cx="1262.4" cy="263.4" r="9.2" stroke="#111" stroke-width="1" fill="#fff"/>
<text x="1262.4" y="267" font-family="Liberation Sans" font-size="9" fill="#222" text-anchor="middle">1'</text>
<circle cx="1342.3" cy="263.4" r="9.2" stroke="#111" stroke-width="1" fill="#fff"/>
<text x="1342.3" y="267" font-family="Liberation Sans" font-size="9" fill="#222" text-anchor="middle">2</text>
<circle cx="1582.2" cy="263.4" r="9.2" stroke="#111" stroke-width="1" fill="#fff"/>
<text x="1582.2" y="267" font-family="Liberation Sans" font-size="9" fill="#222" text-anchor="middle">3</text>
<path d="M1203.6,314 V992 M1458.3,310 V997" stroke="#111" stroke-width="1.4" />
<rect x="1203" y="313.5" width="13" height="4" fill="#111"/>
<rect x="1203" y="989.5" width="13" height="4" fill="#111"/>
<rect x="1458" y="308.5" width="13" height="4" fill="#111"/>
<rect x="1458" y="995" width="13" height="4" fill="#111"/>
<path d="M1023,615.5 H1625" stroke="#111" stroke-width="1.2" />
<rect x="1021.5" y="615" width="4.3" height="13" fill="#111"/>
<path d="M1110.2,424.5 h10.5 v10.5 h-10.5 Z M1110.2,424.5 l10.5,10.5 M1120.7,424.5 l-10.5,10.5" stroke="#1222b0" stroke-width="1.2" />
<path d="M1110.2,435 V460 Q1110.5,472 1120,474.6 H1242.6 L1255,480.9 H1290.6" stroke="#1222b0" stroke-width="1.6" />
<path d="M1120.7,435 V464.2 H1242.6 L1255,458.9 H1290.6" stroke="#1222b0" stroke-width="1.3" />
<path d="M1113,435 V462 Q1114,469 1121,470.5 H1242" stroke="#1222b0" stroke-width="0.8" />
<path d="M1224,464.2 V474.6 M1228.5,464.2 V474.6 M1233,464.2 V474.6 M1238,464.2 V474.6 M1255,458.9 V480.9 M1261.4,458.9 V480.9 M1264,458.9 V480.9" stroke="#1222b0" stroke-width="1.0" />
<path d="M1290.8,450.7 Q1293,436 1306.5,429.5 L1313.5,428.8 H1561" stroke="#1222b0" stroke-width="1.5" />
<path d="M1310.6,451.4 V873.9 M1290.7,450.7 V873.9" stroke="#1222b0" stroke-width="2.0" />
<path d="M1310.6,451.4 Q1311.5,449.5 1313.9,449.1 H1561" stroke="#1222b0" stroke-width="2.0" />
<path d="M1290.6,452.2 H1310.4 M1290.6,460.8 H1310.4" stroke="#1222b0" stroke-width="1.1" />
<path d="M1305,430.9 H1561" stroke="#1222b0" stroke-width="0.8" />
<path d="M1313.9,428.8 V449.5 M1322.1,428.8 V449.5 M1331.1,428.8 V449.5" stroke="#1222b0" stroke-width="1.1" />
<path d="M1561,428.7 H1572.2 L1573.5,431.3 H1625 M1561,447.5 H1572.2 L1573.5,446.9 H1625 M1561,428.7 V447.5 M1572.2,428.7 V447.5" stroke="#1222b0" stroke-width="1.4" />
<path d="M1290.6,479.8 H1310.4 M1290.6,521.5 H1310.4 M1290.6,561.1 H1310.4" stroke="#1222b0" stroke-width="1.0" />
<path d="M1227,522.5 H1290.6 M1227,561.1 H1290.6 M1227,522.5 V561.1 M1246.8,522.5 V561.1 M1260.4,522.5 V561.1 M1264.5,522.5 V561.1" stroke="#1222b0" stroke-width="1.3" />
<path d="M1228.5,522.5 V561.1" stroke="#1222b0" stroke-width="2" />
<path d="M1290.6,873.9 Q1292.5,889 1307,895.8 H1561" stroke="#1222b0" stroke-width="1.6" />
<path d="M1310.4,873.9 Q1311,877 1314.6,877 H1561" stroke="#1222b0" stroke-width="2.0" />
<path d="M1307,895.8 L1314.6,877 M1324,877 V895.8 M1330,877 V895.8 M1339.5,877 V895.8 M1342,877 V895.8" stroke="#1222b0" stroke-width="1.0" />
<path d="M1314.6,893.5 H1561" stroke="#1222b0" stroke-width="0.8" />
<path d="M1561,878 H1572.7 L1573.5,879 H1625 M1561,894.9 H1572.7 L1573.5,893.8 H1625 M1561.4,878 V894.9 M1572.7,878 V894.9" stroke="#1222b0" stroke-width="1.4" />
<path d="M1283.3,783.2 H1290.6 V793.6 H1283.3 Z M1290.6,783.2 H1310.4 M1290.6,793.6 H1310.4" stroke="#1222b0" stroke-width="1.0" />
<path d="M1283.3,837.4 H1290.6 V846.8 H1283.3 Z M1290.6,837.4 H1310.4 M1290.6,846.8 H1310.4" stroke="#1222b0" stroke-width="1.0" />
<path d="M1093.6,627.8 H1162 V658 H1093.6 Z" stroke="#1222b0" stroke-width="1.8" />
<path d="M1107.5,627.8 V658 M1122.7,627.8 V658 M1132,627.8 V658" stroke="#1222b0" stroke-width="2.2" />
<path d="M1095,629 V657 M1103,629 V657 M1117.5,629 V657 M1136,629 V657" stroke="#1222b0" stroke-width="0.9" />
<rect x="1135.5" y="705" width="32" height="170" fill="#5a7fd7" stroke="#1a2ec8" stroke-width="1.2"/>
<path d="M1166.5,705 V875" stroke="#1a2ec8" stroke-width="1.8" />
<rect x="1145.7" y="697.7" width="13.5" height="13.5" fill="#9fb8e8" stroke="#3a5cc0" stroke-width="0.8"/>
<path d="M1152.4,699.5 V709.5 M1147.5,704.5 H1157.3" stroke="#1a2ec8" stroke-width="2.2"/>
<rect x="1145.7" y="867.7" width="13.5" height="13.5" fill="#9fb8e8" stroke="#3a5cc0" stroke-width="0.8"/>
<path d="M1152.4,869.5 V879.5 M1147.5,874.5 H1157.3" stroke="#1a2ec8" stroke-width="2.2"/>
<path d="M1170.7,412.6 H1210.3 V462 H1170.7 Z M1172.7,414.6 H1208.3 V460 H1172.7 Z" stroke="#22d022" stroke-width="1.2" />
<path d="M1170.7,450.6 H1210.3 M1170.7,454.4 H1210.3 M1170.7,457.9 H1210.3" stroke="#22d022" stroke-width="1.1" />
<path d="M1170.7,480.9 H1210.3 V504.8 H1170.7 Z M1170.7,490 H1210.3 M1170.7,494 H1210.3 M1170.7,498 H1210.3" stroke="#22d022" stroke-width="1.2" />
<path d="M1170.7,504.8 Q1171,521 1153,522.5" stroke="#22d022" stroke-width="1.2" />
<path d="M1210.3,504.8 V510 Q1208,545 1185,556 Q1168,562 1153,562.2" stroke="#22d022" stroke-width="1.2" />
<path d="M1101.9,522.5 H1153 V562.2 H1101.9 Z M1122.7,522.5 V562.2" stroke="#22d022" stroke-width="1.2" />
<path d="M1135.3,658 H1167.6 V705 M1135.3,658 V705 M1135.3,694.6 H1167.6" stroke="#22d022" stroke-width="1.2" />
<path d="M1135.3,875 V899 H1167.6 V875 M1137.5,877 V897 H1165.5 V877" stroke="#22d022" stroke-width="1.2" />
<path d="M1215.5,412.6 H1239.5 V442.3 H1215.5 Z M1215.5,419.3 H1239.5 M1217.5,414.6 V440.3" stroke="#d414d4" stroke-width="1.3" />
<path d="M1204,522.5 H1223.9 V562.2 H1204 Z M1207,522.5 V562.2 M1209,562 L1223.9,524" stroke="#d414d4" stroke-width="1.2" />
<path d="M1203,522.5 Q1183,526 1170,540 Q1157.1,555 1157.1,570 V641.4 Q1160,668 1180,677 Q1188,681 1194.7,681 H1271.8" stroke="#d414d4" stroke-width="1.3" />
<path d="M1195.7,562.2 Q1194.5,567.4 1194.5,575 V637 Q1195,643.5 1203,643.5 H1271.8" stroke="#d414d4" stroke-width="1.3" />
<path d="M1157.1,567.4 H1194.5 M1194.5,584 H1203" stroke="#d414d4" stroke-width="1.0" />
<path d="M1271.8,601.8 H1625 M1271.8,603.6 H1625" stroke="#d414d4" stroke-width="1.3" />
<path d="M1271.8,615.3 H1625" stroke="#b010b8" stroke-width="1.8" />
<path d="M1262,601.8 Q1266,598 1271.8,598 M1262,616 Q1266,620 1271.8,620" stroke="#d414d4" stroke-width="1.0" />
<path d="M1271.8,601.8 V700 M1287.5,601.8 V723.8 M1274.8,603 V700" stroke="#d414d4" stroke-width="1.3" />
<path d="M1271.8,628 H1287.5 M1271.8,641.4 H1287.5 M1271.8,681 H1287.5 M1271.8,700 H1287.5" stroke="#d414d4" stroke-width="1.0" />
<path d="M1230.1,605.6 H1261 M1230.1,613 H1261 M1261.4,601.8 V616 M1264,601.8 V616" stroke="#d414d4" stroke-width="1.0" />
<rect x="1214.5" y="601.8" width="15.6" height="15.4" stroke="#d414d4" stroke-width="1.3" fill="none"/>
<circle cx="1222.3" cy="609.5" r="4.5" stroke="#d414d4" stroke-width="1.2" fill="none"/><path d="M1219.0,612.8 L1225.5,606.3" stroke="#d414d4" stroke-width="1.2"/>
<path d="M1222.3,583.8 V597.8 M1219.8,593.8 L1222.3,598.8 L1224.8,593.8 M1222.3,634.8 V620.8 M1219.8,624.8 L1222.3,619.8 L1224.8,624.8" stroke="#d414d4" stroke-width="1.0" />
<rect x="1214.5" y="708" width="15.6" height="15.4" stroke="#d414d4" stroke-width="1.3" fill="none"/>
<circle cx="1222.3" cy="715.7" r="4.5" stroke="#d414d4" stroke-width="1.2" fill="none"/><path d="M1219.0,719 L1225.5,712.5" stroke="#d414d4" stroke-width="1.2"/>
<path d="M1222.3,690 V704 M1219.8,700 L1222.3,705 L1224.8,700 M1222.3,741 V727 M1219.8,731 L1222.3,726 L1224.8,731" stroke="#d414d4" stroke-width="1.0" />
<rect x="1454.7" y="601" width="15.6" height="15.4" stroke="#d414d4" stroke-width="1.3" fill="none"/>
<circle cx="1462.5" cy="608.7" r="4.5" stroke="#d414d4" stroke-width="1.2" fill="none"/><path d="M1459.2,612 L1465.7,605.5" stroke="#d414d4" stroke-width="1.2"/>
<path d="M1462.5,583 V597 M1460.0,593 L1462.5,598 L1465.0,593 M1462.5,634 V620 M1460.0,624 L1462.5,619 L1465.0,624" stroke="#d414d4" stroke-width="1.0" />
<rect x="1455.2" y="708.6" width="15.6" height="15.4" stroke="#d414d4" stroke-width="1.3" fill="none"/>
<circle cx="1463.0" cy="716.3000000000001" r="4.5" stroke="#d414d4" stroke-width="1.2" fill="none"/><path d="M1459.7,719.6 L1466.2,713.1" stroke="#d414d4" stroke-width="1.2"/>
<path d="M1463.0,690.6 V704.6 M1460.5,700.6 L1463.0,705.6 L1465.5,700.6 M1463.0,741.6 V727.6 M1460.5,731.6 L1463.0,726.6 L1465.5,731.6" stroke="#d414d4" stroke-width="1.0" />
<path d="M1439,608.5 H1452 M1473,608.5 H1488 M1439,716 H1452 M1473,716 H1488" stroke="#d414d4" stroke-width="0.9" />
<path d="M1195,617 H1212 M1205,614 L1212,617 L1205,620 M1243,617 H1256" stroke="#d414d4" stroke-width="0.9" />
<path d="M1271.8,709.2 H1625 M1271.8,711 H1625" stroke="#d414d4" stroke-width="1.3" />
<path d="M1271.8,723.8 H1625" stroke="#b010b8" stroke-width="1.8" />
<path d="M1230.1,712 H1271.8 M1230.1,719.5 H1253 M1253,720.7 V743 Q1256,752 1267.7,752 H1278" stroke="#d414d4" stroke-width="1.1" />
<path d="M1262,719.5 V730 L1257,725 Z" stroke="#d414d4" stroke-width="0.8" />
<path d="M1195,716 H1212 M1205,713 L1212,716 L1205,719" stroke="#d414d4" stroke-width="0.9" />
<circle cx="1276" cy="747" r="5.5" stroke="#d414d4" stroke-width="1.1" fill="none"/>
<rect x="1137.3" y="627.8" width="30" height="29" stroke="#111" stroke-width="1.1" fill="none"/>
<circle cx="1150.9" cy="642.4" r="12.3" stroke="#111" stroke-width="1.1" fill="none"/>
<circle cx="1150.9" cy="642.4" r="2.2" stroke="#111" stroke-width="0.9" fill="none"/>
<path d="M1153.3,643.0 Q1158.9,642.9 1158.5,649.6 M1151.5,644.8 Q1154.5,649.6 1148.4,652.6 M1149.1,644.2 Q1146.5,649.1 1140.8,645.4 M1148.5,641.8 Q1142.9,641.9 1143.3,635.2 M1150.3,640.0 Q1147.3,635.2 1153.4,632.2 M1152.7,640.6 Q1155.3,635.7 1161.0,639.4 " stroke="#111" stroke-width="1" fill="none"/>
<rect x="1137.3" y="659.1" width="30" height="29" stroke="#111" stroke-width="1.1" fill="none"/>
<circle cx="1150.9" cy="673.7" r="12.3" stroke="#111" stroke-width="1.1" fill="none"/>
<circle cx="1150.9" cy="673.7" r="2.2" stroke="#111" stroke-width="0.9" fill="none"/>
<path d="M1153.3,674.3 Q1158.9,674.2 1158.5,680.9 M1151.5,676.1 Q1154.5,680.9 1148.4,683.9 M1149.1,675.5 Q1146.5,680.4 1140.8,676.7 M1148.5,673.1 Q1142.9,673.2 1143.3,666.5 M1150.3,671.3 Q1147.3,666.5 1153.4,663.5 M1152.7,671.9 Q1155.3,667.0 1161.0,670.7 " stroke="#111" stroke-width="1" fill="none"/>
<path d="M1150.9,642 V720" stroke="#7090c8" stroke-width="0.8" />
<path d="M1118.6,712 V615.3 H1185.3 V712 H1129" stroke="#b83838" stroke-width="1.1" stroke-dasharray="4 3"/>
<path d="M1150.9,667.5 H1342.3" stroke="#7ea0d0" stroke-width="0.9" />
<circle cx="1150.9" cy="667.5" r="3.2" fill="#7090c8"/><circle cx="1342.3" cy="667.5" r="3.5" fill="#7090c8"/>
<text x="1230" y="661" font-family="Liberation Sans" font-size="11" fill="#3a5a90">7129.4</text>
<path d="M1240.5,674 V682 M1253,674 V682 M1240.5,678 H1253" stroke="#3a5a90" stroke-width="1.0" />
<text transform="translate(1128,724) rotate(-90)" font-family="Liberation Sans" font-size="12.5" fill="#3a5aa0">3200.0</text>
<text transform="translate(1128,894) rotate(-90)" font-family="Liberation Sans" font-size="12.5" fill="#3a5aa0">3400.0</text>
</g>
<rect x="1590.5" y="175.5" width="33" height="115" rx="4" fill="#f4f4f4" stroke="#c8c8c8" stroke-width="1.5"/>
<circle cx="1617" cy="181" r="3.5" fill="none" stroke="#b0b0b0" stroke-width="1.2"/><circle cx="1617" cy="283" r="3.5" fill="none" stroke="#b0b0b0" stroke-width="1.2"/>
<rect x="1596" y="196" width="17" height="16" rx="4" fill="none" stroke="#9a9a9a" stroke-width="1.3"/><circle cx="1603" cy="204" r="5" fill="none" stroke="#9a9a9a" stroke-width="1.2"/>
<text x="1606" y="216" font-family="Liberation Sans" font-size="8" font-weight="bold" fill="#5a9ad0">2D</text>
<path d="M1602,223 L1608,223 L1605,227 Z" fill="#888"/><path d="M1597,240 H1620" stroke="#c8c8c8"/>
<rect x="1598" y="244" width="10" height="9" fill="#8fd08f"/><circle cx="1609" cy="254" r="3.5" fill="none" stroke="#777" stroke-width="1.2"/><path d="M1611.5,256.5 L1614,259" stroke="#777" stroke-width="1.5"/>
<path d="M1602,266 L1608,266 L1605,270 Z" fill="#888"/>
</svg><!--vpl-end--></div>
<div class="a" style="left:1625px;top:172px;width:18px;height:933px;background:#2f3644"></div>
<svg class="a" style="left:1629px;top:178px" width="10" height="6"><path d="M1 5L5 1L9 5" stroke="#7a828e" stroke-width="1.5" fill="none"/></svg>
<div class="a" style="left:1626px;top:189px;width:16px;height:1px;background:#454d5b"></div>
<div class="a" style="left:1630px;top:630px;width:7px;height:18px;background:#8a94a2;border-radius:3px"></div>
<svg class="a" style="left:1629px;top:1093px" width="10" height="6"><path d="M1 1L5 5L9 1" stroke="#7a828e" stroke-width="1.5" fill="none"/></svg>
<div class="vcb" style="left:963px;top:1105px;width:680px;border-top:1px solid #2d3440"></div>
<div class="t" style="left:990px;top:1107px;color:#e6eaee;font-size:12px">1 : 50</div>
<svg class="a" style="left:1046px;top:1106px" width="18" height="17"><rect x="1" y="2" width="16" height="12" fill="#b0b0b0"/><path d="M1 2h4v4h-4zM9 2h4v4h-4zM5 6h4v4h-4zM13 6h4v4h-4zM1 10h4v4h-4zM9 10h4v4h-4z" fill="#d8d8d8"/></svg>
<svg class="a" style="left:1072px;top:1106px" width="18" height="17"><path d="M1 6L5 2H14V11L10 15H1Z" fill="none" stroke="#e6e6e6" stroke-width="1.2"/><path d="M1 6H10V15M10 6L14 2" stroke="#e6e6e6" stroke-width="1.2" fill="none"/></svg>
<svg class="a" style="left:1098px;top:1106px" width="18" height="17"><circle cx="7" cy="7" r="4" fill="#f0c860"/><path d="M7 0V2M0 7H2M2 2L3.5 3.5M12 2L10.5 3.5" stroke="#f0c860"/><circle cx="13" cy="11" r="3.5" fill="#6fd0e0"/><rect x="11.5" y="14" width="3" height="3" fill="#fff"/></svg>
<svg class="a" style="left:1124px;top:1106px" width="18" height="17"><circle cx="8" cy="6" r="5" fill="#9a9ea4"/><circle cx="13" cy="10" r="4" fill="#8a8e94"/><rect x="2" y="13" width="9" height="3" fill="#222"/><rect x="13" y="13" width="3" height="3" fill="#8a8e94"/></svg>
<svg class="a" style="left:1150px;top:1106px" width="18" height="17"><path d="M1 8H5M8 3V14H16" stroke="#6fb8e8" stroke-width="1.3" stroke-dasharray="2 1" fill="none"/><path d="M10 10L15 15M15 10L10 15" stroke="#e04545" stroke-width="1.8"/></svg>
<svg class="a" style="left:1176px;top:1106px" width="18" height="17"><path d="M1 8H5M8 3V14H16" stroke="#6fb8e8" stroke-width="1.3" stroke-dasharray="2 1" fill="none"/><circle cx="13" cy="10" r="3.5" fill="#6fd0e0"/><rect x="11.5" y="14" width="3" height="3" fill="#fff"/></svg>
<svg class="a" style="left:1203px;top:1106px" width="18" height="17"><circle cx="4" cy="10" r="3" fill="none" stroke="#b8bcc2" stroke-width="1.5"/><circle cx="12" cy="10" r="3" fill="none" stroke="#b8bcc2" stroke-width="1.5"/><path d="M4 7L6 3M12 7L10 3" stroke="#b8bcc2" stroke-width="1.2"/></svg>
<svg class="a" style="left:1228px;top:1106px" width="18" height="17"><circle cx="8" cy="7" r="5" fill="#6fd0e0"/><rect x="6" y="12" width="4" height="4" fill="#fff"/></svg>
<svg class="a" style="left:1254px;top:1106px" width="18" height="17"><rect x="1" y="2" width="9" height="8" fill="#d0d0d0"/><rect x="5" y="6" width="9" height="9" fill="none" stroke="#e0e0e0" stroke-dasharray="2 1"/></svg>
<svg class="a" style="left:1280px;top:1106px" width="18" height="17"><path d="M1 1V8M15 1V8M2 4H14" stroke="#e0e0e0" stroke-width="1.2"/><path d="M1 9V14H9" stroke="#e0e0e0" stroke-dasharray="2 1" fill="none"/><circle cx="13" cy="11" r="3.5" fill="#6fd0e0"/><rect x="11.5" y="14" width="3" height="3" fill="#fff"/></svg>
<svg class="a" style="left:1306px;top:1109px" width="7" height="10"><path d="M6 1L2 5L6 9" stroke="#8a929e" stroke-width="1.4" fill="none"/></svg>
<div class="a" style="left:1316px;top:1106px;width:295px;height:16px;background:#313845"></div>
<div class="a" style="left:1455px;top:1110px;width:18px;height:8px;background:#8a94a2;border-radius:4px"></div>
<svg class="a" style="left:1616px;top:1109px" width="7" height="10"><path d="M1 1L5 5L1 9" stroke="#8a929e" stroke-width="1.4" fill="none"/></svg>
<svg class="a" style="left:1631px;top:1111px" width="8" height="8"><rect x="5" y="1" width="2" height="2" fill="#8a929e"/><rect x="5" y="5" width="2" height="2" fill="#8a929e"/><rect x="1" y="5" width="2" height="2" fill="#8a929e"/></svg>
<!-- PROJECT BROWSER -->
<div id="pb" class="a">
<div class="hdr" style="left:0;top:0;width:274px;padding-left:3px;font-size:11.7px">Project Browser - MEP-HVAC-3D-001-00</div>
<svg class="a" style="left:259px;top:4px" width="11" height="11"><path d="M1 1L10 10M10 1L1 10" stroke="#b8bec6" stroke-width="1.6"/></svg>
<div class="a" style="left:0;top:18px;width:274px;height:24px;background:#222833"></div>
<div class="a" style="left:2px;top:19px;width:22px;height:22px;background:#3b4354;border-radius:2px"></div>
<svg class="a" style="left:6px;top:21px" width="18" height="18"><path d="M1 8L8 1L15 8" stroke="#e6e6e6" stroke-width="1.5" fill="none"/><path d="M3 8V16H11V8" fill="#e6e6e6"/><rect x="5" y="11" width="2" height="5" fill="#e0d070"/><path d="M11 12H17M11 15H17" stroke="#9fd0f0" stroke-width="2"/></svg>
<svg class="a" style="left:30px;top:21px" width="18" height="18"><path d="M1 5V1H5M12 1H16V5M16 12V16H12M5 16H1V12" stroke="#e6e6e6" stroke-width="1.3" fill="none"/><rect x="4" y="4" width="9" height="9" fill="#e0e0e0"/></svg>
<svg class="a" style="left:54px;top:21px" width="18" height="18"><rect x="1" y="1" width="16" height="16" fill="#e6e6e6"/><path d="M3 5H15M3 8H15M3 11H15M3 14H15" stroke="#555" stroke-width="1"/></svg>
<svg class="a" style="left:78px;top:21px" width="18" height="18"><rect x="1" y="2" width="16" height="13" fill="#e6e6e6"/><path d="M1 6H17M1 10H17M6 2V15M11 2V15" stroke="#333" stroke-width="1"/></svg>
<svg class="a" style="left:102px;top:21px" width="18" height="18"><path d="M2 4L10 2L16 6V16H2Z" fill="#e0e0e0"/><path d="M10 8L16 14" stroke="#555" stroke-width="2"/></svg>
<svg class="a" style="left:126px;top:21px" width="18" height="18"><rect x="1" y="1" width="16" height="16" fill="#e6e6e6"/><path d="M1 9H9V1" stroke="#222833" stroke-width="2" fill="none"/></svg>
<svg class="a" style="left:150px;top:21px" width="18" height="18"><path d="M3 1H1V17H3M15 1H17V17H15" stroke="#e6e6e6" stroke-width="1.3" fill="none"/><circle cx="7" cy="8" r="4" fill="#e0e0e0"/><rect x="7" y="8" width="7" height="7" fill="#c8c8c8"/></svg>
<svg class="a" style="left:174px;top:21px" width="18" height="18"><path d="M3 12L7 8M8 14L14 8M2 10A3 3 0 0 1 6 6L8 8M10 10L12 12A3 3 0 0 0 16 8" stroke="#d8a060" stroke-width="1.8" fill="none"/></svg>
<svg class="a" style="left:198px;top:21px" width="18" height="18"><rect x="1" y="1" width="8" height="9" fill="#6fb8e8"/><rect x="1" y="10" width="8" height="7" fill="#e0e0e0"/><rect x="9" y="9" width="8" height="8" fill="#e0e0e0"/></svg>
<div class="a" style="left:10px;top:50px;width:256px;height:23px;background:#343b48"></div>
<svg class="a" style="left:17px;top:53px" width="17" height="17"><circle cx="6.5" cy="6.5" r="5" stroke="#c0c4ca" stroke-width="1.6" fill="none"/><path d="M10 10L15 15" stroke="#c0c4ca" stroke-width="2"/></svg>
<div class="t" style="left:41px;top:55px;color:#8e96a2;font-weight:bold;font-size:11.5px">Search</div>
<div class="a" style="left:255px;top:81px;width:17px;height:891px;background:#343b48"></div>
<svg class="a" style="left:259px;top:86px" width="10" height="6"><path d="M1 5L5 1L9 5" stroke="#7a828e" stroke-width="1.5" fill="none"/></svg>
<div class="a" style="left:260px;top:103px;width:8px;height:414px;background:#76808f;border-radius:4px"></div>
<svg class="a" style="left:259px;top:957px" width="10" height="6"><path d="M1 1L5 5L9 1" stroke="#7a828e" stroke-width="1.5" fill="none"/></svg>
<div class="a" style="left:7px;top:91px;width:8px;height:2px;background:#c8ccd2"></div>
<svg class="a" style="left:24px;top:83px" width="16" height="16"><path d="M1 4V1H4M12 1H15V4M15 12V15H12M4 15H1V12" stroke="#e0e0e0" stroke-width="1.2" fill="none"/><rect x="4" y="4" width="8" height="8" fill="#e6e6e6"/></svg>
<div class="tr" style="left:44px;top:84px;font-weight:normal">Views (Discipline)</div>
<div class="a" style="left:23px;top:111px;width:8px;height:2px;background:#c8ccd2"></div>
<div class="tr" style="left:40px;top:104px;font-weight:normal">Coordination</div>
<div class="a" style="left:39px;top:131px;width:8px;height:2px;background:#c8ccd2"></div>
<div class="tr" style="left:56px;top:124px;font-weight:normal">HVAC</div>
<div class="a" style="left:55px;top:151px;width:8px;height:2px;background:#c8ccd2"></div>
<div class="tr" style="left:72px;top:144px;font-weight:normal">3D Views</div>
<div class="a" style="left:2px;top:162px;width:252px;height:18px;background:#343b48"></div>
<svg class="a" style="left:88px;top:163px" width="17" height="17"><rect x="0.5" y="0.5" width="15" height="15.5" fill="none" stroke="#dfe3e8" stroke-width="1" stroke-dasharray="3 1.6"/><rect x="3.5" y="3.5" width="9" height="9.5" fill="none" stroke="#dfe3e8" stroke-width="1"/></svg>
<div class="tr" style="left:108px;top:164px;font-weight:normal">3D Coordination</div>
<div class="a" style="left:23px;top:191px;width:8px;height:2px;background:#c8ccd2"></div>
<div class="tr" style="left:40px;top:184px;font-weight:normal">Mechanical</div>
<div class="a" style="left:39px;top:211px;width:8px;height:2px;background:#c8ccd2"></div>
<div class="tr" style="left:56px;top:204px;font-weight:normal">HVAC</div>
<div class="a" style="left:55px;top:231px;width:8px;height:2px;background:#c8ccd2"></div>
<div class="tr" style="left:72px;top:224px;font-weight:normal">Floor Plans</div>
<svg class="a" style="left:88px;top:243px" width="17" height="17"><rect x="0.5" y="0.5" width="15" height="15.5" fill="none" stroke="#dfe3e8" stroke-width="1" stroke-dasharray="3 1.6"/><rect x="3.5" y="3.5" width="9" height="9.5" fill="none" stroke="#dfe3e8" stroke-width="1"/></svg>
<div class="tr" style="left:108px;top:244px;font-weight:normal">00 Parter -M</div>
<svg class="a" style="left:88px;top:263px" width="17" height="17"><rect x="0.5" y="0.5" width="15" height="15.5" fill="none" stroke="#dfe3e8" stroke-width="1" stroke-dasharray="3 1.6"/><rect x="3.5" y="3.5" width="9" height="9.5" fill="none" stroke="#dfe3e8" stroke-width="1"/></svg>
<div class="tr" style="left:108px;top:264px;font-weight:normal">01 Antresola - M</div>
<svg class="a" style="left:88px;top:283px" width="17" height="17"><rect x="0.5" y="0.5" width="15" height="15.5" fill="none" stroke="#dfe3e8" stroke-width="1" stroke-dasharray="3 1.6"/><rect x="3.5" y="3.5" width="9" height="9.5" fill="none" stroke="#dfe3e8" stroke-width="1"/></svg>
<div class="tr" style="left:108px;top:284px;font-weight:bold">01 Kratownica sp&oacute;d</div>
<div class="a" style="left:55px;top:311px;width:8px;height:2px;background:#c8ccd2"></div>
<div class="tr" style="left:72px;top:304px;font-weight:normal">Ceiling Plans</div>
<svg class="a" style="left:88px;top:323px" width="17" height="17"><rect x="0.5" y="0.5" width="15" height="15.5" fill="none" stroke="#dfe3e8" stroke-width="1" stroke-dasharray="3 1.6"/><rect x="3.5" y="3.5" width="9" height="9.5" fill="none" stroke="#dfe3e8" stroke-width="1"/></svg>
<div class="tr" style="left:108px;top:324px;font-weight:normal">00 Parter - Ceiling - M</div>
<svg class="a" style="left:88px;top:343px" width="17" height="17"><rect x="0.5" y="0.5" width="15" height="15.5" fill="none" stroke="#dfe3e8" stroke-width="1" stroke-dasharray="3 1.6"/><rect x="3.5" y="3.5" width="9" height="9.5" fill="none" stroke="#dfe3e8" stroke-width="1"/></svg>
<div class="tr" style="left:108px;top:344px;font-weight:normal">01 Antresola - Ceiling - M</div>
<div class="a" style="left:55px;top:371px;width:8px;height:2px;background:#c8ccd2"></div>
<div class="tr" style="left:72px;top:364px;font-weight:normal">3D Views</div>
<svg class="a" style="left:88px;top:383px" width="17" height="17"><rect x="0.5" y="0.5" width="15" height="15.5" fill="none" stroke="#dfe3e8" stroke-width="1" stroke-dasharray="3 1.6"/><rect x="3.5" y="3.5" width="9" height="9.5" fill="none" stroke="#dfe3e8" stroke-width="1"/></svg>
<div class="tr" style="left:108px;top:384px;font-weight:normal">3D HVAC</div>
<svg class="a" style="left:88px;top:403px" width="17" height="17"><rect x="0.5" y="0.5" width="15" height="15.5" fill="none" stroke="#dfe3e8" stroke-width="1" stroke-dasharray="3 1.6"/><rect x="3.5" y="3.5" width="9" height="9.5" fill="none" stroke="#dfe3e8" stroke-width="1"/></svg>
<div class="tr" style="left:108px;top:404px;font-weight:normal">{3D}</div>
<div class="a" style="left:55px;top:431px;width:8px;height:2px;background:#c8ccd2"></div>
<div class="tr" style="left:72px;top:424px;font-weight:normal">Elevations (Building Elevation)</div>
<svg class="a" style="left:88px;top:443px" width="17" height="17"><rect x="0.5" y="0.5" width="15" height="15.5" fill="none" stroke="#dfe3e8" stroke-width="1" stroke-dasharray="3 1.6"/><rect x="3.5" y="3.5" width="9" height="9.5" fill="none" stroke="#dfe3e8" stroke-width="1"/></svg>
<div class="tr" style="left:108px;top:444px;font-weight:normal">East - Mech</div>
<svg class="a" style="left:88px;top:463px" width="17" height="17"><rect x="0.5" y="0.5" width="15" height="15.5" fill="none" stroke="#dfe3e8" stroke-width="1" stroke-dasharray="3 1.6"/><rect x="3.5" y="3.5" width="9" height="9.5" fill="none" stroke="#dfe3e8" stroke-width="1"/></svg>
<div class="tr" style="left:108px;top:464px;font-weight:normal">North - Mech</div>
<svg class="a" style="left:88px;top:483px" width="17" height="17"><rect x="0.5" y="0.5" width="15" height="15.5" fill="none" stroke="#dfe3e8" stroke-width="1" stroke-dasharray="3 1.6"/><rect x="3.5" y="3.5" width="9" height="9.5" fill="none" stroke="#dfe3e8" stroke-width="1"/></svg>
<div class="tr" style="left:108px;top:484px;font-weight:normal">South - Mech</div>
<svg class="a" style="left:88px;top:503px" width="17" height="17"><rect x="0.5" y="0.5" width="15" height="15.5" fill="none" stroke="#dfe3e8" stroke-width="1" stroke-dasharray="3 1.6"/><rect x="3.5" y="3.5" width="9" height="9.5" fill="none" stroke="#dfe3e8" stroke-width="1"/></svg>
<div class="tr" style="left:108px;top:504px;font-weight:normal">West - Mech</div>
<div class="a" style="left:55px;top:531px;width:8px;height:2px;background:#c8ccd2"></div>
<div class="tr" style="left:72px;top:524px;font-weight:normal">Sections (Building Section)</div>
<svg class="a" style="left:88px;top:543px" width="17" height="17"><rect x="0.5" y="0.5" width="15" height="15.5" fill="none" stroke="#dfe3e8" stroke-width="1" stroke-dasharray="3 1.6"/><rect x="3.5" y="3.5" width="9" height="9.5" fill="none" stroke="#dfe3e8" stroke-width="1"/></svg>
<div class="tr" style="left:108px;top:544px;font-weight:normal">A-A</div>
<svg class="a" style="left:88px;top:563px" width="17" height="17"><rect x="0.5" y="0.5" width="15" height="15.5" fill="none" stroke="#dfe3e8" stroke-width="1" stroke-dasharray="3 1.6"/><rect x="3.5" y="3.5" width="9" height="9.5" fill="none" stroke="#dfe3e8" stroke-width="1"/></svg>
<div class="tr" style="left:108px;top:564px;font-weight:normal">B-B</div>
<svg class="a" style="left:88px;top:583px" width="17" height="17"><rect x="0.5" y="0.5" width="15" height="15.5" fill="none" stroke="#dfe3e8" stroke-width="1" stroke-dasharray="3 1.6"/><rect x="3.5" y="3.5" width="9" height="9.5" fill="none" stroke="#dfe3e8" stroke-width="1"/></svg>
<div class="tr" style="left:108px;top:584px;font-weight:normal">C-C</div>
<div class="a" style="left:23px;top:611px;width:8px;height:2px;background:#c8ccd2"></div>
<div class="tr" style="left:40px;top:604px;font-weight:normal">Plumbing</div>
<div class="a" style="left:39px;top:631px;width:8px;height:2px;background:#c8ccd2"></div>
<div class="tr" style="left:56px;top:624px;font-weight:normal">Plumbing</div>
<div class="a" style="left:55px;top:651px;width:8px;height:2px;background:#c8ccd2"></div>
<div class="tr" style="left:72px;top:644px;font-weight:normal">Floor Plans</div>
<svg class="a" style="left:88px;top:663px" width="17" height="17"><rect x="0.5" y="0.5" width="15" height="15.5" fill="none" stroke="#dfe3e8" stroke-width="1" stroke-dasharray="3 1.6"/><rect x="3.5" y="3.5" width="9" height="9.5" fill="none" stroke="#dfe3e8" stroke-width="1"/></svg>
<div class="tr" style="left:108px;top:664px;font-weight:normal">00 Parter - P</div>
<svg class="a" style="left:88px;top:683px" width="17" height="17"><rect x="0.5" y="0.5" width="15" height="15.5" fill="none" stroke="#dfe3e8" stroke-width="1" stroke-dasharray="3 1.6"/><rect x="3.5" y="3.5" width="9" height="9.5" fill="none" stroke="#dfe3e8" stroke-width="1"/></svg>
<div class="tr" style="left:108px;top:684px;font-weight:normal">01 Antresola - P</div>
<div class="a" style="left:55px;top:711px;width:8px;height:2px;background:#c8ccd2"></div>
<div class="tr" style="left:72px;top:704px;font-weight:normal">Ceiling Plans</div>
<svg class="a" style="left:88px;top:723px" width="17" height="17"><rect x="0.5" y="0.5" width="15" height="15.5" fill="none" stroke="#dfe3e8" stroke-width="1" stroke-dasharray="3 1.6"/><rect x="3.5" y="3.5" width="9" height="9.5" fill="none" stroke="#dfe3e8" stroke-width="1"/></svg>
<div class="tr" style="left:108px;top:724px;font-weight:normal">00 Parter - Ceiling - P</div>
<svg class="a" style="left:88px;top:743px" width="17" height="17"><rect x="0.5" y="0.5" width="15" height="15.5" fill="none" stroke="#dfe3e8" stroke-width="1" stroke-dasharray="3 1.6"/><rect x="3.5" y="3.5" width="9" height="9.5" fill="none" stroke="#dfe3e8" stroke-width="1"/></svg>
<div class="tr" style="left:108px;top:744px;font-weight:normal">01 Antresola - Ceiling - P</div>
<div class="a" style="left:55px;top:771px;width:8px;height:2px;background:#c8ccd2"></div>
<div class="tr" style="left:72px;top:764px;font-weight:normal">3D Views</div>
<svg class="a" style="left:88px;top:783px" width="17" height="17"><rect x="0.5" y="0.5" width="15" height="15.5" fill="none" stroke="#dfe3e8" stroke-width="1" stroke-dasharray="3 1.6"/><rect x="3.5" y="3.5" width="9" height="9.5" fill="none" stroke="#dfe3e8" stroke-width="1"/></svg>
<div class="tr" style="left:108px;top:784px;font-weight:normal">3D Plumbing</div>
<svg class="a" style="left:88px;top:803px" width="17" height="17"><rect x="0.5" y="0.5" width="15" height="15.5" fill="none" stroke="#dfe3e8" stroke-width="1" stroke-dasharray="3 1.6"/><rect x="3.5" y="3.5" width="9" height="9.5" fill="none" stroke="#dfe3e8" stroke-width="1"/></svg>
<div class="tr" style="left:108px;top:804px;font-weight:normal">3D Plumbing Only</div>
<div class="a" style="left:55px;top:831px;width:8px;height:2px;background:#c8ccd2"></div>
<div class="tr" style="left:72px;top:824px;font-weight:normal">Elevations (Building Elevation)</div>
<svg class="a" style="left:88px;top:843px" width="17" height="17"><rect x="0.5" y="0.5" width="15" height="15.5" fill="none" stroke="#dfe3e8" stroke-width="1" stroke-dasharray="3 1.6"/><rect x="3.5" y="3.5" width="9" height="9.5" fill="none" stroke="#dfe3e8" stroke-width="1"/></svg>
<div class="tr" style="left:108px;top:844px;font-weight:normal">East - Plumbing</div>
<svg class="a" style="left:88px;top:863px" width="17" height="17"><rect x="0.5" y="0.5" width="15" height="15.5" fill="none" stroke="#dfe3e8" stroke-width="1" stroke-dasharray="3 1.6"/><rect x="3.5" y="3.5" width="9" height="9.5" fill="none" stroke="#dfe3e8" stroke-width="1"/></svg>
<div class="tr" style="left:108px;top:864px;font-weight:normal">North - Plumbing</div>
<svg class="a" style="left:88px;top:883px" width="17" height="17"><rect x="0.5" y="0.5" width="15" height="15.5" fill="none" stroke="#dfe3e8" stroke-width="1" stroke-dasharray="3 1.6"/><rect x="3.5" y="3.5" width="9" height="9.5" fill="none" stroke="#dfe3e8" stroke-width="1"/></svg>
<div class="tr" style="left:108px;top:884px;font-weight:normal">South - Plumbing</div>
<svg class="a" style="left:88px;top:903px" width="17" height="17"><rect x="0.5" y="0.5" width="15" height="15.5" fill="none" stroke="#dfe3e8" stroke-width="1" stroke-dasharray="3 1.6"/><rect x="3.5" y="3.5" width="9" height="9.5" fill="none" stroke="#dfe3e8" stroke-width="1"/></svg>
<div class="tr" style="left:108px;top:904px;font-weight:normal">West - Plumbing</div>
<div class="a" style="left:55px;top:931px;width:8px;height:2px;background:#c8ccd2"></div>
<div class="tr" style="left:72px;top:924px;font-weight:normal">Sections (Building Section)</div>
<svg class="a" style="left:88px;top:943px" width="17" height="17"><rect x="0.5" y="0.5" width="15" height="15.5" fill="none" stroke="#dfe3e8" stroke-width="1" stroke-dasharray="3 1.6"/><rect x="3.5" y="3.5" width="9" height="9.5" fill="none" stroke="#dfe3e8" stroke-width="1"/></svg>
<div class="tr" style="left:108px;top:944px;font-weight:normal">B-B P</div>
<div class="a" style="left:10px;top:111px;width:12px;height:0;border-top:1px dashed #6e7684"></div>
<div class="a" style="left:10px;top:99px;width:0;height:12px;border-left:1px dashed #6e7684"></div>
<div class="a" style="left:26px;top:131px;width:12px;height:0;border-top:1px dashed #6e7684"></div>
<div class="a" style="left:26px;top:119px;width:0;height:12px;border-left:1px dashed #6e7684"></div>
<div class="a" style="left:42px;top:151px;width:12px;height:0;border-top:1px dashed #6e7684"></div>
<div class="a" style="left:42px;top:139px;width:0;height:12px;border-left:1px dashed #6e7684"></div>
<div class="a" style="left:58px;top:171px;width:28px;height:0;border-top:1px dashed #6e7684"></div>
<div class="a" style="left:58px;top:159px;width:0;height:12px;border-left:1px dashed #6e7684"></div>
<div class="a" style="left:10px;top:191px;width:12px;height:0;border-top:1px dashed #6e7684"></div>
<div class="a" style="left:10px;top:99px;width:0;height:92px;border-left:1px dashed #6e7684"></div>
<div class="a" style="left:26px;top:211px;width:12px;height:0;border-top:1px dashed #6e7684"></div>
<div class="a" style="left:26px;top:199px;width:0;height:12px;border-left:1px dashed #6e7684"></div>
<div class="a" style="left:42px;top:231px;width:12px;height:0;border-top:1px dashed #6e7684"></div>
<div class="a" style="left:42px;top:219px;width:0;height:12px;border-left:1px dashed #6e7684"></div>
<div class="a" style="left:58px;top:251px;width:28px;height:0;border-top:1px dashed #6e7684"></div>
<div class="a" style="left:58px;top:239px;width:0;height:12px;border-left:1px dashed #6e7684"></div>
<div class="a" style="left:58px;top:271px;width:28px;height:0;border-top:1px dashed #6e7684"></div>
<div class="a" style="left:58px;top:239px;width:0;height:32px;border-left:1px dashed #6e7684"></div>
<div class="a" style="left:58px;top:291px;width:28px;height:0;border-top:1px dashed #6e7684"></div>
<div class="a" style="left:58px;top:239px;width:0;height:52px;border-left:1px dashed #6e7684"></div>
<div class="a" style="left:42px;top:311px;width:12px;height:0;border-top:1px dashed #6e7684"></div>
<div class="a" style="left:42px;top:219px;width:0;height:92px;border-left:1px dashed #6e7684"></div>
<div class="a" style="left:58px;top:331px;width:28px;height:0;border-top:1px dashed #6e7684"></div>
<div class="a" style="left:58px;top:319px;width:0;height:12px;border-left:1px dashed #6e7684"></div>
<div class="a" style="left:58px;top:351px;width:28px;height:0;border-top:1px dashed #6e7684"></div>
<div class="a" style="left:58px;top:319px;width:0;height:32px;border-left:1px dashed #6e7684"></div>
<div class="a" style="left:42px;top:371px;width:12px;height:0;border-top:1px dashed #6e7684"></div>
<div class="a" style="left:42px;top:219px;width:0;height:152px;border-left:1px dashed #6e7684"></div>
<div class="a" style="left:58px;top:391px;width:28px;height:0;border-top:1px dashed #6e7684"></div>
<div class="a" style="left:58px;top:379px;width:0;height:12px;border-left:1px dashed #6e7684"></div>
<div class="a" style="left:58px;top:411px;width:28px;height:0;border-top:1px dashed #6e7684"></div>
<div class="a" style="left:58px;top:379px;width:0;height:32px;border-left:1px dashed #6e7684"></div>
<div class="a" style="left:42px;top:431px;width:12px;height:0;border-top:1px dashed #6e7684"></div>
<div class="a" style="left:42px;top:219px;width:0;height:212px;border-left:1px dashed #6e7684"></div>
<div class="a" style="left:58px;top:451px;width:28px;height:0;border-top:1px dashed #6e7684"></div>
<div class="a" style="left:58px;top:439px;width:0;height:12px;border-left:1px dashed #6e7684"></div>
<div class="a" style="left:58px;top:471px;width:28px;height:0;border-top:1px dashed #6e7684"></div>
<div class="a" style="left:58px;top:439px;width:0;height:32px;border-left:1px dashed #6e7684"></div>
<div class="a" style="left:58px;top:491px;width:28px;height:0;border-top:1px dashed #6e7684"></div>
<div class="a" style="left:58px;top:439px;width:0;height:52px;border-left:1px dashed #6e7684"></div>
<div class="a" style="left:58px;top:511px;width:28px;height:0;border-top:1px dashed #6e7684"></div>
<div class="a" style="left:58px;top:439px;width:0;height:72px;border-left:1px dashed #6e7684"></div>
<div class="a" style="left:42px;top:531px;width:12px;height:0;border-top:1px dashed #6e7684"></div>
<div class="a" style="left:42px;top:219px;width:0;height:312px;border-left:1px dashed #6e7684"></div>
<div class="a" style="left:58px;top:551px;width:28px;height:0;border-top:1px dashed #6e7684"></div>
<div class="a" style="left:58px;top:539px;width:0;height:12px;border-left:1px dashed #6e7684"></div>
<div class="a" style="left:58px;top:571px;width:28px;height:0;border-top:1px dashed #6e7684"></div>
<div class="a" style="left:58px;top:539px;width:0;height:32px;border-left:1px dashed #6e7684"></div>
<div class="a" style="left:58px;top:591px;width:28px;height:0;border-top:1px dashed #6e7684"></div>
<div class="a" style="left:58px;top:539px;width:0;height:52px;border-left:1px dashed #6e7684"></div>
<div class="a" style="left:10px;top:611px;width:12px;height:0;border-top:1px dashed #6e7684"></div>
<div class="a" style="left:10px;top:99px;width:0;height:512px;border-left:1px dashed #6e7684"></div>
<div class="a" style="left:26px;top:631px;width:12px;height:0;border-top:1px dashed #6e7684"></div>
<div class="a" style="left:26px;top:619px;width:0;height:12px;border-left:1px dashed #6e7684"></div>
<div class="a" style="left:42px;top:651px;width:12px;height:0;border-top:1px dashed #6e7684"></div>
<div class="a" style="left:42px;top:639px;width:0;height:12px;border-left:1px dashed #6e7684"></div>
<div class="a" style="left:58px;top:671px;width:28px;height:0;border-top:1px dashed #6e7684"></div>
<div class="a" style="left:58px;top:659px;width:0;height:12px;border-left:1px dashed #6e7684"></div>
<div class="a" style="left:58px;top:691px;width:28px;height:0;border-top:1px dashed #6e7684"></div>
<div class="a" style="left:58px;top:659px;width:0;height:32px;border-left:1px dashed #6e7684"></div>
<div class="a" style="left:42px;top:711px;width:12px;height:0;border-top:1px dashed #6e7684"></div>
<div class="a" style="left:42px;top:639px;width:0;height:72px;border-left:1px dashed #6e7684"></div>
<div class="a" style="left:58px;top:731px;width:28px;height:0;border-top:1px dashed #6e7684"></div>
<div class="a" style="left:58px;top:719px;width:0;height:12px;border-left:1px dashed #6e7684"></div>
<div class="a" style="left:58px;top:751px;width:28px;height:0;border-top:1px dashed #6e7684"></div>
<div class="a" style="left:58px;top:719px;width:0;height:32px;border-left:1px dashed #6e7684"></div>
<div class="a" style="left:42px;top:771px;width:12px;height:0;border-top:1px dashed #6e7684"></div>
<div class="a" style="left:42px;top:639px;width:0;height:132px;border-left:1px dashed #6e7684"></div>
<div class="a" style="left:58px;top:791px;width:28px;height:0;border-top:1px dashed #6e7684"></div>
<div class="a" style="left:58px;top:779px;width:0;height:12px;border-left:1px dashed #6e7684"></div>
<div class="a" style="left:58px;top:811px;width:28px;height:0;border-top:1px dashed #6e7684"></div>
<div class="a" style="left:58px;top:779px;width:0;height:32px;border-left:1px dashed #6e7684"></div>
<div class="a" style="left:42px;top:831px;width:12px;height:0;border-top:1px dashed #6e7684"></div>
<div class="a" style="left:42px;top:639px;width:0;height:192px;border-left:1px dashed #6e7684"></div>
<div class="a" style="left:58px;top:851px;width:28px;height:0;border-top:1px dashed #6e7684"></div>
<div class="a" style="left:58px;top:839px;width:0;height:12px;border-left:1px dashed #6e7684"></div>
<div class="a" style="left:58px;top:871px;width:28px;height:0;border-top:1px dashed #6e7684"></div>
<div class="a" style="left:58px;top:839px;width:0;height:32px;border-left:1px dashed #6e7684"></div>
<div class="a" style="left:58px;top:891px;width:28px;height:0;border-top:1px dashed #6e7684"></div>
<div class="a" style="left:58px;top:839px;width:0;height:52px;border-left:1px dashed #6e7684"></div>
<div class="a" style="left:58px;top:911px;width:28px;height:0;border-top:1px dashed #6e7684"></div>
<div class="a" style="left:58px;top:839px;width:0;height:72px;border-left:1px dashed #6e7684"></div>
<div class="a" style="left:42px;top:931px;width:12px;height:0;border-top:1px dashed #6e7684"></div>
<div class="a" style="left:42px;top:639px;width:0;height:292px;border-left:1px dashed #6e7684"></div>
<div class="a" style="left:58px;top:951px;width:28px;height:0;border-top:1px dashed #6e7684"></div>
<div class="a" style="left:58px;top:939px;width:0;height:12px;border-left:1px dashed #6e7684"></div>
<svg class="a" style="left:26px;top:966px" width="16" height="10"><rect x="1" y="1" width="14" height="12" fill="#e6e6e6"/><rect x="3" y="4" width="10" height="2" fill="#555"/></svg>
<div class="tr" style="left:46px;top:964px">Legends</div>
<div class="a" style="left:0;top:973px;width:274px;height:60px;background:#3b4354"></div>
</div>
<!-- STATUS -->
<div class="a" style="left:0;top:1148px;width:1920px;height:3px;background:#0a0a0c"></div>
<div id="status" class="a">
  <div class="t" style="left:1px;top:6px;font-size:12px;letter-spacing:-0.28px;color:#e6eaee">Click to select, TAB for alternates, CTRL adds, SHIFT unselects.</div>
  <svg class="a" style="left:892px;top:4px" width="20" height="18"><rect x="1" y="3" width="6" height="12" fill="#8fc8f0"/><rect x="7" y="1" width="6" height="9" fill="#f0b080"/><rect x="6" y="8" width="6" height="10" fill="#50c070"/><path d="M11 16L18 9" stroke="#6fb8e8" stroke-width="2"/></svg>
  <svg class="a" style="left:1113px;top:10px" width="9" height="6"><path d="M1 1L4.5 4.5L8 1" stroke="#5e6674" stroke-width="1.4" fill="none"/></svg>
  <svg class="a" style="left:1132px;top:5px" width="16" height="16"><rect x="1" y="9" width="6" height="7" fill="#b8bcc2"/><rect x="6" y="1" width="8" height="7" fill="#b8bcc2"/><path d="M4 9L9 5" stroke="#b8bcc2" stroke-width="3"/></svg>
  <div class="t" style="left:1148px;top:6px;color:#b8bec6">:0</div>
  <svg class="a" style="left:1183px;top:4px" width="17" height="17"><rect x="1" y="1" width="15" height="15" fill="#f0f0f0"/><path d="M3 5H4M6 5H14M3 8H4M6 8H14M3 11H4M6 11H14" stroke="#333" stroke-width="1.2"/></svg>
  <svg class="a" style="left:1210px;top:4px" width="17" height="17"><rect x="3" y="1" width="13" height="12" fill="#8a9098"/><path d="M5 4H14M5 7H14M5 10H14" stroke="#3b4352" stroke-width="1"/><path d="M1 13H8V16" stroke="#8a9098" stroke-width="1.5" fill="none"/></svg>
  <div class="t" style="left:1237px;top:6px;color:#7f8794">Main Model</div>
  <svg class="a" style="left:1428px;top:10px" width="9" height="6"><path d="M1 1L4.5 4.5L8 1" stroke="#5e6674" stroke-width="1.4" fill="none"/></svg>
  <svg class="a" style="left:1665px;top:4px" width="20" height="20"><path d="M1 3A3 3 0 0 1 6 1M3 7L8 1" stroke="#e08a70" stroke-width="1.2" fill="none"/><path d="M10 1L16 7M16 1L10 7" stroke="#f04848" stroke-width="2"/><path d="M7 7V19L10 16L13 20L14 19L12 15H16Z" fill="#fff"/></svg>
  <svg class="a" style="left:1690px;top:4px" width="20" height="20"><path d="M1 9L7 3L9 9Z" fill="#6fb8e8"/><path d="M11 1L17 7M17 1L11 7" stroke="#f04848" stroke-width="2"/><path d="M8 7V19L11 16L14 20L15 19L13 15H17Z" fill="#fff"/></svg>
  <svg class="a" style="left:1716px;top:4px" width="20" height="20"><rect x="2" y="3" width="7" height="5" fill="#c8ccd0"/><path d="M11 1L17 7M17 1L11 7" stroke="#f04848" stroke-width="2"/><path d="M8 7V19L11 16L14 20L15 19L13 15H17Z" fill="#fff"/></svg>
  <svg class="a" style="left:1742px;top:4px" width="20" height="20"><path d="M1 5L7 2V18L1 20Z" fill="#8fc8f0"/><path d="M11 1L17 7M17 1L11 7" stroke="#f04848" stroke-width="2"/><path d="M8 7V19L11 16L14 20L15 19L13 15H17Z" fill="#fff"/></svg>
  <svg class="a" style="left:1767px;top:4px" width="20" height="20"><path d="M1 8H9M6 5L9 8L6 11M5 1V6" stroke="#fff" stroke-width="1.4" fill="none"/><path d="M8 7V19L11 16L14 20L15 19L13 15H17Z" fill="#fff"/></svg>
  <svg class="a" style="left:1794px;top:5px" width="18" height="18"><circle cx="9" cy="9" r="6" fill="none" stroke="#7a828e" stroke-width="2" stroke-dasharray="2 2"/></svg>
  <svg class="a" style="left:1818px;top:5px" width="18" height="18"><path d="M1 1H17L11 8V17H7V8Z" fill="#c8ccd2"/></svg>
  <div class="t" style="left:1836px;top:6px;color:#e0e4e8">:1</div>
</div>

<div id="redge" class="a" style="left:1919px;top:0;width:1px;height:1148px;background:#f4f4f4"></div>
</body></html>
